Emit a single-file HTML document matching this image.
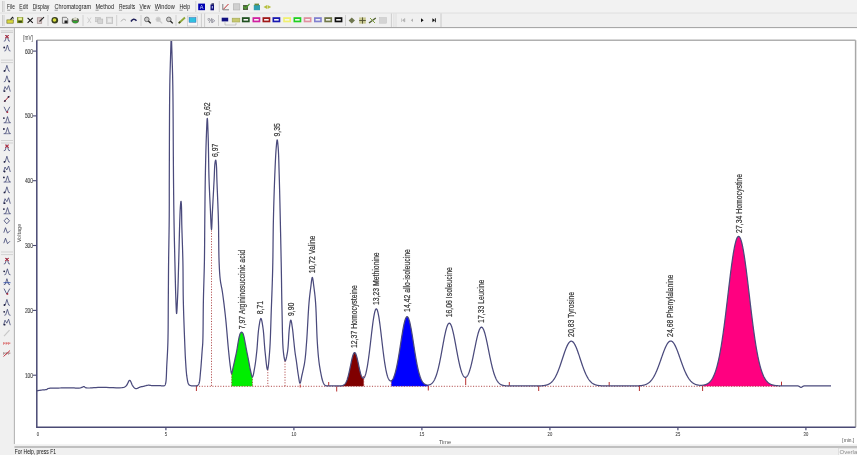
<!DOCTYPE html>
<html><head><meta charset="utf-8"><style>html,body{margin:0;padding:0;width:857px;height:455px;overflow:hidden;background:#f0f0f0;position:relative}svg{will-change:transform}</style></head><body>
<svg width="857" height="455" viewBox="0 0 857 455" style="position:absolute;left:0;top:0">
<rect x="0" y="0" width="857" height="455" fill="#f0f0f0"/>
<rect x="0" y="0" width="857" height="13" fill="#f2f2f2"/>
<line x1="0" y1="13.2" x2="857" y2="13.2" stroke="#d0d0d0" stroke-width="0.8"/>
<line x1="2.5" y1="1" x2="2.5" y2="12" stroke="#c4c4c4" stroke-width="0.8"/>
<line x1="4" y1="1" x2="4" y2="12" stroke="#c4c4c4" stroke-width="0.8"/>
<text x="7.1" y="9.1" font-family="Liberation Sans, sans-serif" font-size="7.0" fill="#202020" textLength="7.7" lengthAdjust="spacingAndGlyphs">File</text>
<line x1="7.1" y1="10.2" x2="10.3" y2="10.2" stroke="#444" stroke-width="0.5"/>
<text x="19.3" y="9.1" font-family="Liberation Sans, sans-serif" font-size="7.0" fill="#202020" textLength="8.7" lengthAdjust="spacingAndGlyphs">Edit</text>
<line x1="19.3" y1="10.2" x2="22.5" y2="10.2" stroke="#444" stroke-width="0.5"/>
<text x="32.7" y="9.1" font-family="Liberation Sans, sans-serif" font-size="7.0" fill="#202020" textLength="16.7" lengthAdjust="spacingAndGlyphs">Display</text>
<line x1="32.7" y1="10.2" x2="35.900000000000006" y2="10.2" stroke="#444" stroke-width="0.5"/>
<text x="54.6" y="9.1" font-family="Liberation Sans, sans-serif" font-size="7.0" fill="#202020" textLength="36.5" lengthAdjust="spacingAndGlyphs">Chromatogram</text>
<line x1="54.6" y1="10.2" x2="57.800000000000004" y2="10.2" stroke="#444" stroke-width="0.5"/>
<text x="95.5" y="9.1" font-family="Liberation Sans, sans-serif" font-size="7.0" fill="#202020" textLength="18.5" lengthAdjust="spacingAndGlyphs">Method</text>
<line x1="95.5" y1="10.2" x2="98.7" y2="10.2" stroke="#444" stroke-width="0.5"/>
<text x="118.9" y="9.1" font-family="Liberation Sans, sans-serif" font-size="7.0" fill="#202020" textLength="16.3" lengthAdjust="spacingAndGlyphs">Results</text>
<line x1="118.9" y1="10.2" x2="122.10000000000001" y2="10.2" stroke="#444" stroke-width="0.5"/>
<text x="139.4" y="9.1" font-family="Liberation Sans, sans-serif" font-size="7.0" fill="#202020" textLength="10.9" lengthAdjust="spacingAndGlyphs">View</text>
<line x1="139.4" y1="10.2" x2="142.6" y2="10.2" stroke="#444" stroke-width="0.5"/>
<text x="154.8" y="9.1" font-family="Liberation Sans, sans-serif" font-size="7.0" fill="#202020" textLength="19.9" lengthAdjust="spacingAndGlyphs">Window</text>
<line x1="154.8" y1="10.2" x2="158.0" y2="10.2" stroke="#444" stroke-width="0.5"/>
<text x="179.5" y="9.1" font-family="Liberation Sans, sans-serif" font-size="7.0" fill="#202020" textLength="10.6" lengthAdjust="spacingAndGlyphs">Help</text>
<line x1="179.5" y1="10.2" x2="182.7" y2="10.2" stroke="#444" stroke-width="0.5"/>
<rect x="0" y="13.5" width="857" height="13.7" fill="#f0f0f0"/>
<line x1="0" y1="27.6" x2="857" y2="27.6" stroke="#a8a8a8" stroke-width="1.3"/>
<line x1="2.5" y1="15" x2="2.5" y2="26" stroke="#c4c4c4" stroke-width="0.8"/>
<line x1="4" y1="15" x2="4" y2="26" stroke="#c4c4c4" stroke-width="0.8"/>
<line x1="48" y1="15" x2="48" y2="26" stroke="#c8c8c8" stroke-width="0.8"/>
<line x1="83" y1="15" x2="83" y2="26" stroke="#c8c8c8" stroke-width="0.8"/>
<line x1="116.7" y1="15" x2="116.7" y2="26" stroke="#c8c8c8" stroke-width="0.8"/>
<line x1="141" y1="15" x2="141" y2="26" stroke="#c8c8c8" stroke-width="0.8"/>
<line x1="176" y1="15" x2="176" y2="26" stroke="#c8c8c8" stroke-width="0.8"/>
<line x1="218.5" y1="15" x2="218.5" y2="26" stroke="#c8c8c8" stroke-width="0.8"/>
<line x1="345.5" y1="15" x2="345.5" y2="26" stroke="#c8c8c8" stroke-width="0.8"/>
<line x1="201.4" y1="13.5" x2="201.4" y2="27" stroke="#c4c4c4" stroke-width="0.8"/>
<line x1="204.6" y1="13.5" x2="204.6" y2="27" stroke="#c4c4c4" stroke-width="0.8"/>
<line x1="391.4" y1="13.5" x2="391.4" y2="27" stroke="#c4c4c4" stroke-width="0.8"/>
<line x1="393.9" y1="13.5" x2="393.9" y2="27" stroke="#d4d4d4" stroke-width="0.6"/>
<line x1="396" y1="13.5" x2="396" y2="27" stroke="#d4d4d4" stroke-width="0.6"/>
<line x1="441" y1="13.5" x2="441" y2="27" stroke="#c4c4c4" stroke-width="0.9"/>
<line x1="195.8" y1="1" x2="195.8" y2="12" stroke="#c8c8c8" stroke-width="0.8"/>
<line x1="219.3" y1="1" x2="219.3" y2="12" stroke="#c8c8c8" stroke-width="0.8"/>
<rect x="198.2" y="3.6" width="6.8" height="6.6" fill="#0000b0"/>
<text x="201.6" y="9.2" font-family="Liberation Sans, sans-serif" font-size="5.5" fill="#cfd8ff" text-anchor="middle">A</text>
<rect x="210.5" y="4.5" width="3.5" height="5.8" fill="#10107a"/><rect x="211.5" y="3.3" width="2.5" height="1.6" fill="#303060"/><rect x="211.8" y="6" width="1" height="2.5" fill="#c0c8ff"/>
<path d="M222.8,4 L222.8,9.8 L229,9.8" fill="none" stroke="#707070" stroke-width="0.9"/><path d="M223.5,9.2 L228.5,4" stroke="#c03030" stroke-width="1"/>
<rect x="233.3" y="3.8" width="6.5" height="6.2" fill="#d0d0d0" stroke="#b0b0b0" stroke-width="0.6"/>
<rect x="243" y="5" width="5" height="5" fill="#506040"/><path d="M243.5,6.5 L245.5,8.5 L249.5,3.8" fill="none" stroke="#50a030" stroke-width="1.2"/>
<rect x="253.8" y="5" width="6.2" height="5.2" fill="#30a0b0"/><rect x="254.5" y="3.6" width="4.5" height="1.8" fill="#6a8a3a"/>
<path d="M263.5,7 L267,5 L267,9 Z M267.5,5 L271.2,7 L267.5,9 Z" fill="#b8c040"/>
<path d="M6.8,19.8 L13.5,19.8 L13.3,23.3 L6.8,23.3 Z" fill="#d8d840" stroke="#505020" stroke-width="0.5"/><path d="M10.5,19.6 L12.5,17.3 L13.6,18.5" fill="none" stroke="#202020" stroke-width="1.1"/>
<rect x="17" y="17.1" width="6.2" height="6" fill="#8a9a30"/><rect x="18.3" y="17.6" width="3.6" height="2.4" fill="#e8f0a0"/><rect x="18.3" y="21" width="3.6" height="1.6" fill="#3a4a10"/>
<path d="M27.6,17.8 L32.8,22.8 M32.8,17.8 L27.6,22.8" stroke="#151515" stroke-width="1.1"/>
<rect x="37.2" y="17.8" width="4.6" height="5.6" fill="#d8c8c8" stroke="#8a7070" stroke-width="0.5"/><path d="M39.5,21.5 L44,17.2" stroke="#252525" stroke-width="1.1"/>
<circle cx="54.8" cy="20.3" r="3.3" fill="#3a4020"/><circle cx="54.5" cy="20" r="1.8" fill="#d8e040"/>
<path d="M62.4,17.3 L66.3,17.3 L67.8,18.8 L67.8,23.3 L62.4,23.3 Z" fill="#e8e8e8" stroke="#404040" stroke-width="0.6"/><rect x="64.5" y="20.5" width="3" height="2.6" fill="#202020"/>
<ellipse cx="75.3" cy="20.6" rx="3.7" ry="2.8" fill="#606850"/><path d="M72.5,21 L78,21 L77,23 L73.5,23 Z" fill="#30a030"/><rect x="73.3" y="18" width="3.8" height="2" fill="#d8d8c8"/>
<path d="M87.5,17.5 L91,23 M91,17.5 L87.5,23" stroke="#c8c8c8" stroke-width="0.8"/>
<rect x="95.5" y="17.3" width="5" height="4.5" fill="#d4d4d4" stroke="#b8b8b8" stroke-width="0.5"/><rect x="97.8" y="19" width="5" height="4.5" fill="#d4d4d4" stroke="#b0b0b0" stroke-width="0.5"/>
<rect x="106.5" y="17.2" width="6.2" height="6.2" fill="#d8d8d8" stroke="#b8b8b8" stroke-width="0.6"/><rect x="108" y="18.5" width="3.4" height="3.6" fill="#ececec"/>
<path d="M121,21.5 Q123.5,17.5 126,20.5" fill="none" stroke="#b0b0b0" stroke-width="1"/>
<path d="M131,21.5 Q133.5,17.3 136.5,20.8" fill="none" stroke="#20205a" stroke-width="1.6"/>
<circle cx="146.79999999999998" cy="19.4" r="2.3" fill="#c8c8c8" stroke="#6a6a6a" stroke-width="0.9"/><path d="M148.39999999999998,21 L150.79999999999998,23.4" stroke="#252525" stroke-width="1.3"/>
<circle cx="158.2" cy="19.4" r="2.3" fill="#c8c8c8" stroke="#d4d4d4" stroke-width="0.9"/><path d="M159.79999999999998,21 L162.2,23.4" stroke="#cccccc" stroke-width="1.3"/>
<circle cx="168.79999999999998" cy="19.4" r="2.3" fill="#c8c8c8" stroke="#6a6a6a" stroke-width="0.9"/><path d="M170.39999999999998,21 L172.79999999999998,23.4" stroke="#252525" stroke-width="1.3"/>
<path d="M179,23 L185,17.5" stroke="#90a838" stroke-width="1.8"/><path d="M178.6,23.3 L180.3,21.8" stroke="#404a20" stroke-width="1.4"/>
<rect x="187.4" y="16" width="10.2" height="10" fill="#f8f8f8" stroke="#c0c0c0" stroke-width="0.6"/><rect x="189" y="17.5" width="7" height="4.8" fill="#30c0e0" stroke="#2050a0" stroke-width="0.4"/>
<text x="207.5" y="22.6" font-family="Liberation Sans, sans-serif" font-size="6.5" fill="#606070">%</text><path d="M212.5,19 L214.8,20.8 L212.5,22.5" fill="none" stroke="#808090" stroke-width="0.7"/>
<rect x="221.7" y="17.7" width="6.5" height="3.7" fill="#101080"/><path d="M225,22 L225,25 L236,25 L236,23" fill="none" stroke="#a0a0a0" stroke-width="0.5"/>
<rect x="232.2" y="18.2" width="7.6" height="3.8" fill="#c8c870" stroke="#a0a850" stroke-width="0.6"/>
<rect x="241.9" y="17.2" width="7.8" height="5.1" fill="#205020"/><rect x="243.5" y="19.0" width="4.6" height="1.6" fill="#f4f4f4"/>
<rect x="252.5" y="17.2" width="7.8" height="5.1" fill="#d020a0"/><rect x="254.1" y="19.0" width="4.6" height="1.6" fill="#f4f4f4"/>
<rect x="262.5" y="17.2" width="7.8" height="5.1" fill="#a01818"/><rect x="264.1" y="19.0" width="4.6" height="1.6" fill="#f4f4f4"/>
<rect x="272.5" y="17.2" width="7.8" height="5.1" fill="#1818b0"/><rect x="274.1" y="19.0" width="4.6" height="1.6" fill="#f4f4f4"/>
<rect x="283.2" y="17.2" width="7.8" height="5.1" fill="#f0f070"/><rect x="284.8" y="19.0" width="4.6" height="1.6" fill="#f4f4f4"/>
<rect x="293.5" y="17.2" width="7.8" height="5.1" fill="#20d020"/><rect x="295.1" y="19.0" width="4.6" height="1.6" fill="#f4f4f4"/>
<rect x="303.7" y="17.2" width="7.8" height="5.1" fill="#e090a0"/><rect x="305.3" y="19.0" width="4.6" height="1.6" fill="#f4f4f4"/>
<rect x="314" y="17.2" width="7.8" height="5.1" fill="#8080d0"/><rect x="315.6" y="19.0" width="4.6" height="1.6" fill="#f4f4f4"/>
<rect x="324.3" y="17.2" width="7.8" height="5.1" fill="#707848"/><rect x="325.90000000000003" y="19.0" width="4.6" height="1.6" fill="#f4f4f4"/>
<rect x="334.6" y="17.2" width="7.8" height="5.1" fill="#101010"/><rect x="336.20000000000005" y="19.0" width="4.6" height="1.6" fill="#f4f4f4"/>
<path d="M351.8,17.5 L355,20.5 L351.8,23.5 L348.6,20.5 Z" fill="#707850"/>
<rect x="359.2" y="17.4" width="6.6" height="6.2" fill="#c8c890"/><path d="M362.5,17.4 V23.6 M359.2,20.5 H365.8" stroke="#505030" stroke-width="0.9"/>
<path d="M369,23 L375.8,18" stroke="#506030" stroke-width="1.4"/><path d="M370,18 L375,23" stroke="#80a040" stroke-width="1"/>
<rect x="379.6" y="17.6" width="6.8" height="5.6" fill="#d4d4d4" stroke="#c0c0c0" stroke-width="0.5"/>
<path d="M401.5,18.5 V22 M404.8,18.5 L402.5,20.25 L404.8,22 Z" fill="#b0b0b0" stroke="#b0b0b0" stroke-width="0.6"/>
<path d="M413,18.5 L410.8,20.25 L413,22 Z" fill="#b0b0b0"/>
<path d="M421,18.3 L423.6,20.25 L421,22.2 Z" fill="#101010"/>
<path d="M432.4,18.3 L435,20.25 L432.4,22.2 Z" fill="#101010"/><path d="M435.4,18.3 V22.2" stroke="#101010" stroke-width="0.9"/>
<rect x="0" y="28.3" width="14.4" height="418" fill="#f0f0f0"/>
<line x1="14.4" y1="28.3" x2="14.4" y2="444" stroke="#a0a0a0" stroke-width="0.9"/>
<line x1="1" y1="30.9" x2="13" y2="30.9" stroke="#c4c4c4" stroke-width="0.7"/>
<line x1="1" y1="32.5" x2="13" y2="32.5" stroke="#c4c4c4" stroke-width="0.7"/>
<line x1="1" y1="60.1" x2="13" y2="60.1" stroke="#c4c4c4" stroke-width="0.7"/>
<line x1="1" y1="62.6" x2="13" y2="62.6" stroke="#c4c4c4" stroke-width="0.7"/>
<line x1="1" y1="140.5" x2="13" y2="140.5" stroke="#c4c4c4" stroke-width="0.7"/>
<line x1="1" y1="143" x2="13" y2="143" stroke="#c4c4c4" stroke-width="0.7"/>
<line x1="1" y1="252" x2="13" y2="252" stroke="#c4c4c4" stroke-width="0.7"/>
<line x1="1" y1="254.6" x2="13" y2="254.6" stroke="#c4c4c4" stroke-width="0.7"/>
<path d="M3.8,41.2 L5.2,40.800000000000004 L6.9,35.2 L8.6,40.800000000000004 L10,41.2" fill="none" stroke="#3a4070" stroke-width="0.75"/><path d="M5,35.2 L9,38.2 M9,35.2 L5,38.2" stroke="#c02030" stroke-width="0.9"/>
<path d="M4.3,51.0 L5.7,50.6 L7.4,45.0 L9.1,50.6 L10.5,51.0" fill="none" stroke="#3a4070" stroke-width="0.75"/><circle cx="4.2" cy="47.5" r="0.9" fill="#202040"/>
<path d="M3.8,71.3 L5.2,70.89999999999999 L6.9,65.3 L8.6,70.89999999999999 L10,71.3" fill="none" stroke="#3a4070" stroke-width="0.75"/><circle cx="4.5" cy="70.89999999999999" r="0.9" fill="#202040"/>
<path d="M3.8,81.8 L5.2,81.39999999999999 L6.9,75.8 L8.6,81.39999999999999 L10,81.8" fill="none" stroke="#3a4070" stroke-width="0.75"/><circle cx="9.3" cy="81.39999999999999" r="0.9" fill="#202040"/>
<path d="M3.5,91.6 L5,86.6 L6.8,89.6 L8.6,85.6 L10.3,91.6" fill="none" stroke="#3a4070" stroke-width="0.75"/><circle cx="4.6" cy="91.1" r="0.9" fill="#202040"/>
<path d="M4,101.9 L9.5,95.9" stroke="#b02030" stroke-width="1"/><circle cx="5" cy="100.9" r="0.9" fill="#202040"/><circle cx="8.5" cy="96.9" r="0.9" fill="#202040"/>
<path d="M4,106.8 L6.8,112.3 L9.8,106.8" fill="none" stroke="#3a4070" stroke-width="0.8"/><circle cx="7.4" cy="112.1" r="0.9" fill="#b02030"/>
<path d="M4.3999999999999995,122.6 L5.8,122.19999999999999 L7.5,116.6 L9.2,122.19999999999999 L10.6,122.6" fill="none" stroke="#3a4070" stroke-width="0.75"/><path d="M3.5,122.8 L10.5,122.8" stroke="#3a4070" stroke-width="0.6"/><circle cx="3.9" cy="118.1" r="0.9" fill="#202040"/>
<path d="M4.3999999999999995,133.5 L5.8,133.1 L7.5,127.5 L9.2,133.1 L10.6,133.5" fill="none" stroke="#3a4070" stroke-width="0.75"/><path d="M3.5,133.7 L10.5,133.7" stroke="#3a4070" stroke-width="0.6"/><circle cx="3.9" cy="129.0" r="0.9" fill="#202040"/>
<path d="M3.8,150.7 L5.2,150.29999999999998 L6.9,144.7 L8.6,150.29999999999998 L10,150.7" fill="none" stroke="#3a4070" stroke-width="0.75"/><path d="M5,144.7 L9,147.7 M9,144.7 L5,147.7" stroke="#c02030" stroke-width="0.9"/>
<path d="M3.8,162.2 L5.2,161.79999999999998 L6.9,156.2 L8.6,161.79999999999998 L10,162.2" fill="none" stroke="#3a4070" stroke-width="0.75"/><circle cx="4.5" cy="161.79999999999998" r="0.9" fill="#202040"/>
<path d="M3.5,172.0 L5,167.0 L6.8,170.0 L8.6,166.0 L10.3,172.0" fill="none" stroke="#3a4070" stroke-width="0.75"/><circle cx="4.6" cy="171.5" r="0.9" fill="#202040"/>
<path d="M4.3999999999999995,181.9 L5.8,181.5 L7.5,175.9 L9.2,181.5 L10.6,181.9" fill="none" stroke="#3a4070" stroke-width="0.75"/><path d="M3.5,182.1 L10.5,182.1" stroke="#3a4070" stroke-width="0.6"/><circle cx="3.9" cy="177.4" r="0.9" fill="#202040"/>
<path d="M3.8,192.8 L5.2,192.4 L6.9,186.8 L8.6,192.4 L10,192.8" fill="none" stroke="#3a4070" stroke-width="0.75"/><circle cx="4.5" cy="192.4" r="0.9" fill="#202040"/>
<path d="M3.5,203.7 L5,198.7 L6.8,201.7 L8.6,197.7 L10.3,203.7" fill="none" stroke="#3a4070" stroke-width="0.75"/><circle cx="4.6" cy="203.2" r="0.9" fill="#202040"/>
<path d="M4.3999999999999995,213.6 L5.8,213.2 L7.5,207.6 L9.2,213.2 L10.6,213.6" fill="none" stroke="#3a4070" stroke-width="0.75"/><path d="M3.5,213.79999999999998 L10.5,213.79999999999998" stroke="#3a4070" stroke-width="0.6"/><circle cx="3.9" cy="209.1" r="0.9" fill="#202040"/>
<path d="M6.8,217.8 L9.5,220.8 L6.8,223.8 L4.1,220.8 Z" fill="none" stroke="#3a4070" stroke-width="0.8"/>
<path d="M3.8,232.7 L5.5,227.7 L7.5,233.2 L10,230.7" fill="none" stroke="#3a4070" stroke-width="0.8"/>
<path d="M3.8,243.2 L5.5,238.2 L7.5,243.7 L10,241.2" fill="none" stroke="#3a4070" stroke-width="0.8"/>
<path d="M3.8,264 L5.2,263.6 L6.9,258 L8.6,263.6 L10,264" fill="none" stroke="#3a4070" stroke-width="0.75"/><path d="M5,258 L9,261 M9,258 L5,261" stroke="#c02030" stroke-width="0.9"/>
<path d="M4.3,274.8 L5.7,274.40000000000003 L7.4,268.8 L9.1,274.40000000000003 L10.5,274.8" fill="none" stroke="#3a4070" stroke-width="0.75"/><circle cx="4.2" cy="271.3" r="0.9" fill="#202040"/>
<path d="M3.8,284.7 L5.2,284.3 L6.9,278.7 L8.6,284.3 L10,284.7" fill="none" stroke="#3a4070" stroke-width="0.75"/><path d="M3.5,282.7 L10.5,282.7" stroke="#2040a0" stroke-width="0.8"/>
<path d="M4,288.6 L6.8,294.1 L9.8,288.6" fill="none" stroke="#3a4070" stroke-width="0.8"/><circle cx="7.4" cy="293.90000000000003" r="0.9" fill="#b02030"/>
<path d="M3.8,305.4 L5.2,305.0 L6.9,299.4 L8.6,305.0 L10,305.4" fill="none" stroke="#3a4070" stroke-width="0.75"/><circle cx="4.5" cy="305.0" r="0.9" fill="#202040"/>
<path d="M4.3,315.3 L5.7,314.90000000000003 L7.4,309.3 L9.1,314.90000000000003 L10.5,315.3" fill="none" stroke="#3a4070" stroke-width="0.75"/><circle cx="4.2" cy="311.8" r="0.9" fill="#202040"/>
<path d="M3.5,325.2 L5,320.2 L6.8,323.2 L8.6,319.2 L10.3,325.2" fill="none" stroke="#3a4070" stroke-width="0.75"/><circle cx="4.6" cy="324.7" r="0.9" fill="#202040"/>
<path d="M4,336.1 L9.5,330.1" stroke="#c8c8c8" stroke-width="1.2"/>
<text x="6.8" y="344.5" font-family="Liberation Sans, sans-serif" font-size="4.2" fill="#d03030" text-anchor="middle">FFF</text>
<text x="6.8" y="355.3" font-family="Liberation Sans, sans-serif" font-size="4.2" fill="#806060" text-anchor="middle">FFF</text><path d="M3.5,356.5 L10,350.5" stroke="#c02030" stroke-width="0.9"/>
<rect x="14.9" y="28.3" width="842.1" height="416" fill="#ffffff"/>
<rect x="0" y="446" width="857" height="9" fill="#f0f0f0"/>
<line x1="14.4" y1="447" x2="857" y2="447" stroke="#b0b0b0" stroke-width="1.5"/>
<text x="14.7" y="454.3" font-family="Liberation Sans, sans-serif" font-size="6.6" fill="#111" textLength="41.3" lengthAdjust="spacingAndGlyphs">For Help, press F1</text>
<rect x="838.6" y="448.2" width="20" height="8" fill="#f5f5f5" stroke="#d4d4d4" stroke-width="0.6"/>
<text x="839.6" y="453.8" font-family="Liberation Sans, sans-serif" font-size="6" fill="#8a8a8a">Overlay</text>
<line x1="36.8" y1="40.2" x2="855.6" y2="40.2" stroke="#b0b0b0" stroke-width="1.5"/>
<line x1="855.6" y1="40.2" x2="855.6" y2="427.2" stroke="#a8a8a8" stroke-width="1.5"/>
<defs><clipPath id="pc"><rect x="36.8" y="40.9" width="818" height="386"/></clipPath></defs>
<g clip-path="url(#pc)">
<path d="M231.60,386.30 L231.60,373.50 L231.60,373.50 L231.78,373.32 L231.97,372.81 L232.17,372.05 L232.37,371.11 L232.58,370.06 L232.79,368.98 L233.00,367.94 L233.20,367.00 L233.42,366.04 L233.65,365.06 L233.88,364.06 L234.10,363.05 L234.33,362.04 L234.56,361.02 L234.78,360.01 L235.00,359.00 L235.22,358.00 L235.44,357.01 L235.66,356.02 L235.87,355.03 L236.09,354.04 L236.30,353.04 L236.50,352.02 L236.70,351.00 L236.90,349.89 L237.10,348.74 L237.29,347.57 L237.48,346.40 L237.66,345.24 L237.84,344.11 L238.02,343.02 L238.20,342.00 L238.34,341.24 L238.47,340.49 L238.60,339.77 L238.73,339.07 L238.87,338.40 L239.00,337.74 L239.15,337.11 L239.30,336.50 L239.42,336.03 L239.54,335.56 L239.66,335.10 L239.79,334.66 L239.92,334.24 L240.06,333.85 L240.22,333.50 L240.40,333.20 L240.53,333.01 L240.67,332.83 L240.82,332.67 L240.98,332.51 L241.13,332.39 L241.29,332.29 L241.45,332.22 L241.60,332.20 L241.75,332.22 L241.91,332.29 L242.07,332.39 L242.22,332.51 L242.38,332.67 L242.53,332.83 L242.67,333.01 L242.80,333.20 L242.98,333.50 L243.14,333.85 L243.28,334.24 L243.41,334.66 L243.54,335.10 L243.66,335.56 L243.78,336.03 L243.90,336.50 L244.05,337.11 L244.19,337.74 L244.33,338.40 L244.46,339.07 L244.59,339.77 L244.72,340.50 L244.86,341.24 L245.00,342.00 L245.20,343.02 L245.40,344.10 L245.61,345.22 L245.83,346.38 L246.04,347.55 L246.26,348.72 L246.48,349.87 L246.70,351.00 L246.91,352.07 L247.12,353.12 L247.33,354.17 L247.54,355.21 L247.75,356.26 L247.97,357.32 L248.18,358.40 L248.40,359.50 L248.64,360.77 L248.88,362.10 L249.12,363.45 L249.36,364.82 L249.61,366.18 L249.86,367.50 L250.13,368.79 L250.40,370.00 L250.64,371.04 L250.88,372.19 L251.13,373.35 L251.38,374.47 L251.64,375.47 L251.90,376.28 L252.15,376.81 L252.40,377.00 L252.40,377.00 L252.40,386.30 Z" fill="#00ee00"/>
<path d="M336.00,386.30 L336.00,385.99 L336.00,385.99 L336.25,385.99 L336.50,385.99 L336.75,385.99 L337.00,385.99 L337.25,385.99 L337.50,385.99 L337.75,385.99 L338.00,385.98 L338.25,385.98 L338.50,385.98 L338.75,385.97 L339.00,385.97 L339.25,385.96 L339.50,385.95 L339.75,385.94 L340.00,385.93 L340.25,385.92 L340.50,385.90 L340.75,385.88 L341.00,385.86 L341.25,385.83 L341.50,385.79 L341.75,385.75 L342.00,385.69 L342.25,385.63 L342.50,385.56 L342.75,385.48 L343.00,385.38 L343.25,385.27 L343.50,385.14 L343.75,384.99 L344.00,384.81 L344.25,384.61 L344.50,384.39 L344.75,384.13 L345.00,383.84 L345.25,383.51 L345.50,383.15 L345.75,382.74 L346.00,382.29 L346.25,381.80 L346.50,381.25 L346.75,380.65 L347.00,380.00 L347.25,379.30 L347.50,378.54 L347.75,377.73 L348.00,376.86 L348.25,375.93 L348.50,374.96 L348.75,373.93 L349.00,372.86 L349.25,371.75 L349.50,370.60 L349.75,369.42 L350.00,368.21 L350.25,366.98 L350.50,365.75 L350.75,364.52 L351.00,363.30 L351.25,362.09 L351.50,360.92 L351.75,359.78 L352.00,358.70 L352.25,357.67 L352.50,356.72 L352.75,355.85 L353.00,355.06 L353.25,354.38 L353.50,353.79 L353.75,353.32 L354.00,352.96 L354.25,352.73 L354.50,352.61 L354.75,352.62 L355.00,352.75 L355.25,353.00 L355.50,353.37 L355.75,353.86 L356.00,354.45 L356.25,355.14 L356.50,355.93 L356.75,356.80 L357.00,357.75 L357.25,358.76 L357.50,359.83 L357.75,360.94 L358.00,362.08 L358.25,363.25 L358.50,364.43 L358.75,365.61 L359.00,366.77 L359.25,367.92 L359.50,369.04 L359.75,370.12 L360.00,371.16 L360.25,372.15 L360.50,373.07 L360.75,373.94 L361.00,374.73 L361.25,375.45 L361.50,376.09 L361.75,376.65 L362.00,377.13 L362.25,377.52 L362.50,377.83 L362.75,378.05 L363.00,378.18 L363.25,378.23 L363.50,378.18 L363.70,378.07 L363.70,386.30 Z" fill="#800000"/>
<path d="M391.30,386.30 L391.30,380.74 L391.50,380.63 L391.75,380.43 L392.00,380.19 L392.25,379.90 L392.50,379.57 L392.75,379.18 L393.00,378.75 L393.25,378.27 L393.50,377.74 L393.75,377.16 L394.00,376.53 L394.25,375.86 L394.50,375.13 L394.75,374.36 L395.00,373.54 L395.25,372.67 L395.50,371.75 L395.75,370.78 L396.00,369.76 L396.25,368.70 L396.50,367.58 L396.75,366.42 L397.00,365.21 L397.25,363.96 L397.50,362.67 L397.75,361.33 L398.00,359.96 L398.25,358.54 L398.50,357.09 L398.75,355.61 L399.00,354.10 L399.25,352.56 L399.50,351.00 L399.75,349.42 L400.00,347.82 L400.25,346.22 L400.50,344.60 L400.75,342.99 L401.00,341.38 L401.25,339.77 L401.50,338.18 L401.75,336.61 L402.00,335.06 L402.25,333.53 L402.50,332.05 L402.75,330.60 L403.00,329.20 L403.25,327.85 L403.50,326.55 L403.75,325.32 L404.00,324.15 L404.25,323.05 L404.50,322.03 L404.75,321.08 L405.00,320.22 L405.25,319.45 L405.50,318.77 L405.75,318.18 L406.00,317.69 L406.25,317.29 L406.50,316.99 L406.75,316.80 L407.00,316.71 L407.25,316.72 L407.50,316.83 L407.75,317.05 L408.00,317.36 L408.25,317.78 L408.50,318.29 L408.75,318.90 L409.00,319.60 L409.25,320.39 L409.50,321.26 L409.75,322.22 L410.00,323.26 L410.25,324.37 L410.50,325.56 L410.75,326.80 L411.00,328.11 L411.25,329.47 L411.50,330.88 L411.75,332.34 L412.00,333.83 L412.25,335.36 L412.50,336.92 L412.75,338.49 L413.00,340.09 L413.25,341.70 L413.50,343.31 L413.75,344.93 L414.00,346.54 L414.25,348.15 L414.50,349.74 L414.75,351.32 L415.00,352.88 L415.25,354.41 L415.50,355.92 L415.75,357.40 L416.00,358.84 L416.25,360.25 L416.50,361.63 L416.75,362.96 L417.00,364.25 L417.25,365.51 L417.50,366.71 L417.75,367.88 L418.00,368.99 L418.25,370.06 L418.50,371.09 L418.75,372.07 L419.00,373.01 L419.25,373.90 L419.50,374.74 L419.75,375.54 L420.00,376.30 L420.25,377.02 L420.50,377.69 L420.75,378.33 L421.00,378.92 L421.25,379.48 L421.50,380.00 L421.75,380.49 L422.00,380.94 L422.25,381.37 L422.50,381.76 L422.75,382.12 L423.00,382.45 L423.25,382.76 L423.50,383.04 L423.75,383.30 L424.00,383.54 L424.25,383.76 L424.50,383.95 L424.75,384.13 L425.00,384.28 L425.25,384.43 L425.50,384.55 L425.75,384.66 L426.00,384.75 L426.25,384.83 L426.50,384.90 L426.75,384.95 L427.00,385.00 L427.25,385.03 L427.50,385.04 L427.75,385.05 L428.00,385.04 L428.25,385.03 L428.50,385.00 L428.50,385.00 L428.50,386.30 Z" fill="#0000ff"/>
<path d="M702.80,386.30 L702.80,385.21 L703.00,385.19 L703.25,385.15 L703.50,385.11 L703.75,385.07 L704.00,385.02 L704.25,384.96 L704.50,384.90 L704.75,384.84 L705.00,384.77 L705.25,384.69 L705.50,384.61 L705.75,384.52 L706.00,384.43 L706.25,384.33 L706.50,384.22 L706.75,384.10 L707.00,383.98 L707.25,383.84 L707.50,383.70 L707.75,383.55 L708.00,383.39 L708.25,383.22 L708.50,383.04 L708.75,382.85 L709.00,382.64 L709.25,382.43 L709.50,382.20 L709.75,381.96 L710.00,381.71 L710.25,381.44 L710.50,381.15 L710.75,380.86 L711.00,380.54 L711.25,380.21 L711.50,379.86 L711.75,379.49 L712.00,379.11 L712.25,378.70 L712.50,378.28 L712.75,377.83 L713.00,377.37 L713.25,376.88 L713.50,376.37 L713.75,375.83 L714.00,375.27 L714.25,374.69 L714.50,374.08 L714.75,373.45 L715.00,372.78 L715.25,372.09 L715.50,371.37 L715.75,370.62 L716.00,369.85 L716.25,369.04 L716.50,368.20 L716.75,367.33 L717.00,366.43 L717.25,365.49 L717.50,364.52 L717.75,363.52 L718.00,362.48 L718.25,361.41 L718.50,360.30 L718.75,359.16 L719.00,357.98 L719.25,356.77 L719.50,355.52 L719.75,354.24 L720.00,352.91 L720.25,351.56 L720.50,350.16 L720.75,348.73 L721.00,347.26 L721.25,345.76 L721.50,344.22 L721.75,342.64 L722.00,341.04 L722.25,339.39 L722.50,337.71 L722.75,336.00 L723.00,334.26 L723.25,332.48 L723.50,330.68 L723.75,328.84 L724.00,326.98 L724.25,325.08 L724.50,323.16 L724.75,321.22 L725.00,319.25 L725.25,317.26 L725.50,315.25 L725.75,313.22 L726.00,311.17 L726.25,309.11 L726.50,307.03 L726.75,304.94 L727.00,302.84 L727.25,300.73 L727.50,298.62 L727.75,296.50 L728.00,294.38 L728.25,292.26 L728.50,290.15 L728.75,288.04 L729.00,285.94 L729.25,283.85 L729.50,281.77 L729.75,279.71 L730.00,277.67 L730.25,275.65 L730.50,273.65 L730.75,271.68 L731.00,269.73 L731.25,267.82 L731.50,265.94 L731.75,264.10 L732.00,262.30 L732.25,260.54 L732.50,258.83 L732.75,257.16 L733.00,255.54 L733.25,253.97 L733.50,252.45 L733.75,251.00 L734.00,249.60 L734.25,248.26 L734.50,246.98 L734.75,245.77 L735.00,244.63 L735.25,243.55 L735.50,242.55 L735.75,241.61 L736.00,240.75 L736.25,239.96 L736.50,239.25 L736.75,238.62 L737.00,238.06 L737.25,237.59 L737.50,237.19 L737.75,236.87 L738.00,236.63 L738.25,236.48 L738.50,236.41 L738.75,236.41 L739.00,236.50 L739.25,236.68 L739.50,236.93 L739.75,237.26 L740.00,237.67 L740.25,238.17 L740.50,238.74 L740.75,239.39 L741.00,240.11 L741.25,240.92 L741.50,241.79 L741.75,242.74 L742.00,243.76 L742.25,244.85 L742.50,246.01 L742.75,247.23 L743.00,248.52 L743.25,249.87 L743.50,251.28 L743.75,252.75 L744.00,254.28 L744.25,255.85 L744.50,257.48 L744.75,259.16 L745.00,260.89 L745.25,262.66 L745.50,264.47 L745.75,266.31 L746.00,268.20 L746.25,270.12 L746.50,272.07 L746.75,274.04 L747.00,276.05 L747.25,278.07 L747.50,280.12 L747.75,282.18 L748.00,284.26 L748.25,286.36 L748.50,288.46 L748.75,290.57 L749.00,292.68 L749.25,294.80 L749.50,296.92 L749.75,299.04 L750.00,301.15 L750.25,303.26 L750.50,305.35 L750.75,307.44 L751.00,309.52 L751.25,311.58 L751.50,313.62 L751.75,315.65 L752.00,317.66 L752.25,319.64 L752.50,321.61 L752.75,323.55 L753.00,325.46 L753.25,327.35 L753.50,329.21 L753.75,331.04 L754.00,332.84 L754.25,334.60 L754.50,336.34 L754.75,338.05 L755.00,339.72 L755.25,341.35 L755.50,342.96 L755.75,344.52 L756.00,346.05 L756.25,347.55 L756.50,349.01 L756.75,350.44 L757.00,351.82 L757.25,353.17 L757.50,354.49 L757.75,355.77 L758.00,357.01 L758.25,358.22 L758.50,359.39 L758.75,360.52 L759.00,361.62 L759.25,362.68 L759.50,363.71 L759.75,364.71 L760.00,365.67 L760.25,366.60 L760.50,367.50 L760.75,368.36 L761.00,369.19 L761.25,370.00 L761.50,370.77 L761.75,371.51 L762.00,372.22 L762.25,372.91 L762.50,373.57 L762.75,374.20 L763.00,374.80 L763.25,375.38 L763.50,375.93 L763.75,376.46 L764.00,376.97 L764.25,377.45 L764.50,377.92 L764.75,378.36 L765.00,378.78 L765.25,379.18 L765.50,379.56 L765.75,379.93 L766.00,380.27 L766.25,380.60 L766.50,380.91 L766.75,381.21 L767.00,381.49 L767.25,381.76 L767.50,382.01 L767.75,382.25 L768.00,382.47 L768.25,382.69 L768.50,382.89 L768.75,383.08 L769.00,383.26 L769.25,383.43 L769.50,383.59 L769.75,383.74 L770.00,383.89 L770.25,384.02 L770.50,384.15 L770.75,384.27 L771.00,384.38 L771.25,384.48 L771.50,384.58 L771.75,384.67 L772.00,384.76 L772.25,384.84 L772.50,384.91 L772.75,384.98 L773.00,385.05 L773.25,385.11 L773.50,385.17 L773.75,385.22 L774.00,385.27 L774.25,385.32 L774.50,385.36 L774.75,385.41 L775.00,385.44 L775.25,385.48 L775.50,385.51 L775.75,385.54 L776.00,385.57 L776.25,385.60 L776.50,385.62 L776.75,385.64 L777.00,385.66 L777.20,385.68 L777.20,386.30 Z" fill="#ff0080"/>
</g>
<line x1="196.4" y1="386.3" x2="781.5" y2="386.3" stroke="#a83838" stroke-width="0.9" stroke-dasharray="1.1,1.56"/>
<line x1="211.5" y1="230.5" x2="211.5" y2="386.3" stroke="#a83838" stroke-width="0.9" stroke-dasharray="1.1,1.56"/>
<line x1="231.8" y1="374" x2="231.8" y2="386.3" stroke="#a83838" stroke-width="0.9" stroke-dasharray="1.1,1.56"/>
<line x1="252.4" y1="376.5" x2="252.4" y2="386.3" stroke="#a83838" stroke-width="0.9" stroke-dasharray="1.1,1.56"/>
<line x1="267.8" y1="369.5" x2="267.8" y2="386.3" stroke="#a83838" stroke-width="0.9" stroke-dasharray="1.1,1.56"/>
<line x1="285.0" y1="361" x2="285.0" y2="386.3" stroke="#a83838" stroke-width="0.9" stroke-dasharray="1.1,1.56"/>
<line x1="363.7" y1="376" x2="363.7" y2="386.3" stroke="#a83838" stroke-width="0.9" stroke-dasharray="1.1,1.56"/>
<line x1="391.3" y1="381.5" x2="391.3" y2="386.3" stroke="#a83838" stroke-width="0.9" stroke-dasharray="1.1,1.56"/>
<line x1="196.4" y1="385.8" x2="196.4" y2="391" stroke="#b83030" stroke-width="1"/>
<line x1="328.7" y1="382" x2="328.7" y2="386" stroke="#b83030" stroke-width="1"/>
<line x1="336.7" y1="386.5" x2="336.7" y2="391.5" stroke="#b83030" stroke-width="1"/>
<line x1="428.3" y1="386" x2="428.3" y2="390.5" stroke="#b83030" stroke-width="1"/>
<line x1="465.7" y1="377" x2="465.7" y2="385" stroke="#b83030" stroke-width="1"/>
<line x1="509.3" y1="382" x2="509.3" y2="386" stroke="#b83030" stroke-width="1"/>
<line x1="538.7" y1="386" x2="538.7" y2="391" stroke="#b83030" stroke-width="1"/>
<line x1="609.2" y1="382" x2="609.2" y2="386" stroke="#b83030" stroke-width="1"/>
<line x1="639.4" y1="386" x2="639.4" y2="391" stroke="#b83030" stroke-width="1"/>
<line x1="702.6" y1="386" x2="702.6" y2="391" stroke="#b83030" stroke-width="1"/>
<line x1="781.5" y1="381.7" x2="781.5" y2="386" stroke="#b83030" stroke-width="1"/>
<line x1="300.2" y1="384.5" x2="300.2" y2="387.5" stroke="#b83030" stroke-width="1"/>
<g clip-path="url(#pc)">
<path d="M37.00,390.80 L37.63,390.70 L38.25,390.60 L38.88,390.49 L39.51,390.39 L40.13,390.29 L40.76,390.19 L41.38,390.09 L42.00,390.00 L42.62,389.92 L43.28,389.86 L43.94,389.81 L44.60,389.76 L45.23,389.70 L45.82,389.63 L46.35,389.53 L46.80,389.40 L47.01,389.30 L47.18,389.19 L47.33,389.08 L47.46,388.95 L47.60,388.83 L47.76,388.71 L47.95,388.60 L48.20,388.50 L49.12,388.30 L50.35,388.17 L51.81,388.10 L53.43,388.06 L55.13,388.04 L56.84,388.04 L58.49,388.03 L60.00,388.00 L61.29,387.96 L62.56,387.92 L63.81,387.89 L65.05,387.86 L66.29,387.83 L67.52,387.82 L68.76,387.80 L70.00,387.80 L71.30,387.82 L72.68,387.88 L74.09,387.95 L75.48,388.02 L76.82,388.08 L78.04,388.11 L79.12,388.09 L80.00,388.00 L80.33,387.94 L80.62,387.86 L80.87,387.77 L81.11,387.68 L81.33,387.59 L81.54,387.49 L81.76,387.39 L82.00,387.30 L82.24,387.20 L82.48,387.09 L82.72,386.96 L82.95,386.84 L83.19,386.74 L83.42,386.65 L83.66,386.61 L83.90,386.60 L84.15,386.66 L84.37,386.78 L84.59,386.94 L84.81,387.12 L85.05,387.32 L85.32,387.51 L85.63,387.68 L86.00,387.80 L87.12,387.96 L88.52,388.00 L90.16,387.94 L91.98,387.82 L93.92,387.67 L95.94,387.51 L97.99,387.37 L100.00,387.30 L102.84,387.31 L106.07,387.42 L109.52,387.56 L113.01,387.70 L116.36,387.79 L119.40,387.78 L121.93,387.64 L123.80,387.30 L124.30,387.13 L124.71,386.96 L125.07,386.77 L125.37,386.57 L125.65,386.34 L125.92,386.09 L126.20,385.81 L126.50,385.50 L126.93,384.93 L127.35,384.17 L127.75,383.32 L128.15,382.44 L128.54,381.61 L128.93,380.93 L129.31,380.47 L129.70,380.30 L130.09,380.49 L130.47,381.00 L130.85,381.73 L131.22,382.61 L131.59,383.56 L131.98,384.50 L132.38,385.34 L132.80,386.00 L133.13,386.43 L133.47,386.85 L133.81,387.26 L134.16,387.64 L134.52,387.98 L134.89,388.26 L135.29,388.47 L135.70,388.60 L136.18,388.62 L136.69,388.53 L137.23,388.34 L137.78,388.09 L138.34,387.82 L138.90,387.54 L139.46,387.29 L140.00,387.10 L140.50,386.96 L141.00,386.84 L141.50,386.73 L141.99,386.62 L142.49,386.52 L142.99,386.42 L143.49,386.31 L144.00,386.20 L144.54,386.07 L145.09,385.92 L145.65,385.76 L146.21,385.61 L146.77,385.47 L147.32,385.34 L147.87,385.25 L148.40,385.20 L148.86,385.19 L149.29,385.22 L149.71,385.27 L150.13,385.34 L150.56,385.42 L151.01,385.49 L151.48,385.55 L152.00,385.60 L152.86,385.64 L153.83,385.67 L154.87,385.69 L155.94,385.70 L157.03,385.71 L158.09,385.71 L159.09,385.70 L160.00,385.70 L160.65,385.72 L161.30,385.76 L161.93,385.82 L162.55,385.86 L163.12,385.88 L163.65,385.86 L164.11,385.77 L164.50,385.60 L164.73,385.44 L164.91,385.25 L165.06,385.04 L165.19,384.81 L165.29,384.54 L165.39,384.23 L165.49,383.89 L165.60,383.50 L165.88,382.09 L166.10,380.23 L166.26,378.01 L166.39,375.54 L166.49,372.90 L166.58,370.20 L166.68,367.54 L166.80,365.00 L166.95,362.29 L167.11,359.59 L167.26,356.86 L167.41,354.09 L167.55,351.24 L167.68,348.29 L167.80,345.22 L167.90,342.00 L168.01,337.34 L168.09,332.33 L168.15,327.08 L168.18,321.65 L168.21,316.15 L168.24,310.65 L168.26,305.24 L168.30,300.00 L168.34,295.17 L168.37,290.41 L168.41,285.69 L168.44,281.00 L168.47,276.31 L168.51,271.59 L168.55,266.83 L168.60,262.00 L168.66,256.85 L168.74,251.65 L168.83,246.40 L168.91,241.13 L169.00,235.84 L169.08,230.55 L169.15,225.26 L169.20,220.00 L169.24,214.86 L169.26,209.89 L169.27,204.97 L169.27,200.03 L169.27,194.96 L169.27,189.66 L169.28,184.04 L169.30,178.00 L169.33,167.77 L169.37,156.11 L169.41,143.54 L169.45,130.58 L169.51,117.72 L169.58,105.50 L169.68,94.42 L169.80,85.00 L169.88,80.39 L169.98,76.10 L170.08,72.09 L170.19,68.32 L170.30,64.77 L170.40,61.39 L170.51,58.14 L170.60,55.00 L170.66,52.89 L170.72,50.94 L170.79,49.09 L170.84,47.31 L170.90,45.56 L170.95,43.78 L171.00,41.94 L171.05,40.00 L171.10,37.36 L171.13,34.26 L171.16,30.95 L171.19,27.68 L171.22,24.70 L171.24,22.25 L171.27,20.61 L171.30,20.00 L171.33,20.61 L171.36,22.25 L171.38,24.70 L171.41,27.68 L171.44,30.95 L171.47,34.26 L171.50,37.36 L171.55,40.00 L171.60,41.94 L171.65,43.78 L171.70,45.56 L171.76,47.31 L171.81,49.09 L171.88,50.94 L171.94,52.89 L172.00,55.00 L172.09,58.14 L172.19,61.39 L172.30,64.77 L172.41,68.32 L172.51,72.09 L172.62,76.10 L172.71,80.39 L172.80,85.00 L172.93,94.42 L173.04,105.50 L173.13,117.72 L173.20,130.58 L173.27,143.54 L173.34,156.11 L173.42,167.77 L173.50,178.00 L173.56,184.04 L173.61,189.66 L173.67,194.96 L173.72,200.03 L173.78,204.97 L173.85,209.89 L173.92,214.86 L174.00,220.00 L174.09,225.28 L174.19,230.59 L174.30,235.92 L174.42,241.24 L174.54,246.53 L174.66,251.77 L174.78,256.93 L174.90,262.00 L175.01,266.62 L175.11,271.28 L175.22,275.93 L175.33,280.51 L175.44,284.97 L175.55,289.24 L175.67,293.27 L175.80,297.00 L175.89,299.58 L175.98,302.33 L176.08,305.09 L176.18,307.70 L176.28,310.00 L176.38,311.84 L176.49,313.06 L176.60,313.50 L176.72,313.06 L176.84,311.84 L176.97,310.00 L177.10,307.70 L177.23,305.09 L177.36,302.33 L177.48,299.58 L177.60,297.00 L177.76,293.27 L177.91,289.24 L178.05,284.97 L178.18,280.51 L178.31,275.93 L178.44,271.28 L178.57,266.62 L178.70,262.00 L178.84,256.79 L178.98,251.27 L179.12,245.60 L179.25,239.92 L179.39,234.37 L179.52,229.10 L179.66,224.26 L179.80,220.00 L179.88,217.69 L179.96,215.48 L180.04,213.38 L180.12,211.39 L180.21,209.55 L180.30,207.86 L180.39,206.34 L180.50,205.00 L180.56,204.37 L180.62,203.72 L180.68,203.10 L180.75,202.53 L180.82,202.03 L180.88,201.64 L180.94,201.39 L181.00,201.30 L181.06,201.39 L181.11,201.64 L181.16,202.02 L181.21,202.50 L181.26,203.07 L181.31,203.69 L181.36,204.34 L181.40,205.00 L181.48,206.69 L181.54,208.73 L181.59,211.06 L181.62,213.62 L181.66,216.35 L181.69,219.20 L181.74,222.10 L181.80,225.00 L181.91,229.08 L182.05,233.44 L182.20,238.03 L182.35,242.76 L182.51,247.59 L182.66,252.45 L182.79,257.27 L182.90,262.00 L182.98,266.71 L183.03,271.42 L183.06,276.13 L183.09,280.85 L183.12,285.59 L183.15,290.35 L183.21,295.16 L183.30,300.00 L183.43,305.25 L183.58,310.69 L183.75,316.23 L183.94,321.77 L184.13,327.21 L184.33,332.46 L184.52,337.43 L184.70,342.00 L184.82,345.00 L184.94,347.85 L185.05,350.57 L185.16,353.19 L185.28,355.73 L185.41,358.19 L185.55,360.61 L185.70,363.00 L185.83,364.98 L185.96,366.94 L186.09,368.87 L186.23,370.75 L186.39,372.57 L186.56,374.31 L186.76,375.96 L187.00,377.50 L187.17,378.54 L187.34,379.58 L187.51,380.59 L187.70,381.56 L187.91,382.45 L188.16,383.25 L188.45,383.94 L188.80,384.50 L189.03,384.76 L189.27,384.97 L189.53,385.15 L189.79,385.29 L190.08,385.41 L190.37,385.52 L190.68,385.61 L191.00,385.70 L191.44,385.80 L191.93,385.87 L192.44,385.92 L192.97,385.94 L193.51,385.95 L194.04,385.94 L194.54,385.92 L195.00,385.90 L195.35,385.88 L195.69,385.87 L196.03,385.86 L196.35,385.83 L196.66,385.79 L196.96,385.73 L197.24,385.63 L197.50,385.50 L197.74,385.34 L197.96,385.16 L198.16,384.96 L198.34,384.73 L198.52,384.48 L198.68,384.19 L198.84,383.86 L199.00,383.50 L199.30,382.56 L199.55,381.40 L199.75,380.07 L199.91,378.60 L200.06,377.02 L200.20,375.37 L200.34,373.68 L200.50,372.00 L200.74,369.52 L200.98,366.74 L201.21,363.79 L201.43,360.76 L201.65,357.76 L201.85,354.90 L202.03,352.28 L202.20,350.00 L202.29,348.85 L202.38,347.87 L202.46,346.99 L202.53,346.15 L202.60,345.29 L202.67,344.35 L202.74,343.27 L202.80,342.00 L202.92,338.31 L203.01,333.77 L203.08,328.57 L203.14,322.93 L203.19,317.04 L203.24,311.12 L203.31,305.37 L203.40,300.00 L203.51,295.17 L203.63,290.41 L203.77,285.69 L203.91,281.00 L204.05,276.31 L204.18,271.59 L204.30,266.83 L204.40,262.00 L204.48,256.85 L204.54,251.65 L204.59,246.40 L204.64,241.13 L204.67,235.84 L204.71,230.55 L204.75,225.26 L204.80,220.00 L204.85,214.74 L204.91,209.48 L204.96,204.20 L205.01,198.94 L205.07,193.67 L205.14,188.43 L205.21,183.20 L205.30,178.00 L205.40,172.86 L205.50,167.60 L205.62,162.31 L205.74,157.06 L205.87,151.92 L206.00,146.98 L206.15,142.32 L206.30,138.00 L206.41,134.95 L206.53,131.69 L206.66,128.42 L206.79,125.32 L206.92,122.57 L207.05,120.38 L207.18,118.93 L207.30,118.40 L207.42,118.93 L207.54,120.38 L207.66,122.57 L207.77,125.32 L207.89,128.42 L208.00,131.69 L208.10,134.95 L208.20,138.00 L208.32,142.36 L208.42,147.14 L208.51,152.22 L208.59,157.48 L208.67,162.80 L208.76,168.07 L208.87,173.18 L209.00,178.00 L209.13,181.99 L209.28,185.92 L209.44,189.79 L209.61,193.58 L209.78,197.31 L209.95,200.95 L210.13,204.52 L210.30,208.00 L210.45,211.15 L210.60,214.63 L210.75,218.21 L210.91,221.66 L211.06,224.74 L211.21,227.23 L211.36,228.89 L211.50,229.50 L211.62,229.02 L211.73,227.71 L211.84,225.73 L211.94,223.26 L212.05,220.48 L212.16,217.56 L212.27,214.68 L212.40,212.00 L212.59,208.39 L212.80,204.44 L213.02,200.26 L213.25,195.97 L213.48,191.69 L213.70,187.52 L213.91,183.59 L214.10,180.00 L214.22,177.52 L214.32,175.04 L214.41,172.61 L214.50,170.28 L214.60,168.10 L214.71,166.13 L214.84,164.41 L215.00,163.00 L215.08,162.48 L215.16,161.96 L215.25,161.47 L215.35,161.03 L215.44,160.65 L215.53,160.35 L215.62,160.17 L215.70,160.10 L215.80,160.23 L215.90,160.58 L215.99,161.11 L216.08,161.77 L216.17,162.54 L216.25,163.36 L216.33,164.19 L216.40,165.00 L216.50,166.43 L216.58,168.00 L216.64,169.71 L216.69,171.54 L216.73,173.49 L216.77,175.55 L216.83,177.72 L216.90,180.00 L217.05,184.07 L217.23,188.62 L217.44,193.55 L217.65,198.74 L217.86,204.08 L218.06,209.48 L218.25,214.82 L218.40,220.00 L218.52,225.32 L218.60,230.84 L218.66,236.45 L218.72,242.03 L218.77,247.49 L218.85,252.71 L218.95,257.58 L219.10,262.00 L219.21,264.64 L219.32,267.12 L219.44,269.47 L219.57,271.70 L219.72,273.85 L219.88,275.94 L220.07,277.98 L220.30,280.00 L220.51,281.59 L220.75,283.07 L221.01,284.48 L221.28,285.87 L221.56,287.27 L221.85,288.73 L222.13,290.29 L222.40,292.00 L222.80,294.75 L223.20,297.73 L223.61,300.90 L224.03,304.20 L224.43,307.61 L224.84,311.07 L225.23,314.55 L225.60,318.00 L226.00,321.91 L226.38,326.00 L226.75,330.20 L227.11,334.42 L227.47,338.59 L227.81,342.63 L228.16,346.46 L228.50,350.00 L228.75,352.44 L228.99,354.82 L229.22,357.12 L229.46,359.34 L229.69,361.45 L229.93,363.44 L230.16,365.30 L230.40,367.00 L230.55,368.05 L230.69,369.15 L230.83,370.23 L230.97,371.25 L231.12,372.15 L231.27,372.86 L231.43,373.33 L231.60,373.50 L231.78,373.32 L231.97,372.81 L232.17,372.05 L232.37,371.11 L232.58,370.06 L232.79,368.98 L233.00,367.94 L233.20,367.00 L233.42,366.04 L233.65,365.06 L233.88,364.06 L234.10,363.05 L234.33,362.04 L234.56,361.02 L234.78,360.01 L235.00,359.00 L235.22,358.00 L235.44,357.01 L235.66,356.02 L235.87,355.03 L236.09,354.04 L236.30,353.04 L236.50,352.02 L236.70,351.00 L236.90,349.89 L237.10,348.74 L237.29,347.57 L237.48,346.40 L237.66,345.24 L237.84,344.11 L238.02,343.02 L238.20,342.00 L238.34,341.24 L238.47,340.49 L238.60,339.77 L238.73,339.07 L238.87,338.40 L239.00,337.74 L239.15,337.11 L239.30,336.50 L239.42,336.03 L239.54,335.56 L239.66,335.10 L239.79,334.66 L239.92,334.24 L240.06,333.85 L240.22,333.50 L240.40,333.20 L240.53,333.01 L240.67,332.83 L240.82,332.67 L240.98,332.51 L241.13,332.39 L241.29,332.29 L241.45,332.22 L241.60,332.20 L241.75,332.22 L241.91,332.29 L242.07,332.39 L242.22,332.51 L242.38,332.67 L242.53,332.83 L242.67,333.01 L242.80,333.20 L242.98,333.50 L243.14,333.85 L243.28,334.24 L243.41,334.66 L243.54,335.10 L243.66,335.56 L243.78,336.03 L243.90,336.50 L244.05,337.11 L244.19,337.74 L244.33,338.40 L244.46,339.07 L244.59,339.77 L244.72,340.50 L244.86,341.24 L245.00,342.00 L245.20,343.02 L245.40,344.10 L245.61,345.22 L245.83,346.38 L246.04,347.55 L246.26,348.72 L246.48,349.87 L246.70,351.00 L246.91,352.07 L247.12,353.12 L247.33,354.17 L247.54,355.21 L247.75,356.26 L247.97,357.32 L248.18,358.40 L248.40,359.50 L248.64,360.77 L248.88,362.10 L249.12,363.45 L249.36,364.82 L249.61,366.18 L249.86,367.50 L250.13,368.79 L250.40,370.00 L250.64,371.04 L250.88,372.19 L251.13,373.35 L251.38,374.47 L251.64,375.47 L251.90,376.28 L252.15,376.81 L252.40,377.00 L252.68,376.75 L252.97,376.07 L253.25,375.06 L253.54,373.79 L253.82,372.36 L254.09,370.86 L254.35,369.38 L254.60,368.00 L254.91,366.25 L255.20,364.41 L255.47,362.49 L255.73,360.50 L255.98,358.45 L256.22,356.34 L256.46,354.19 L256.70,352.00 L256.98,349.16 L257.23,346.09 L257.46,342.88 L257.69,339.62 L257.93,336.41 L258.19,333.35 L258.47,330.51 L258.80,328.00 L259.03,326.46 L259.28,324.84 L259.54,323.23 L259.81,321.72 L260.09,320.40 L260.36,319.35 L260.63,318.65 L260.90,318.40 L261.17,318.65 L261.44,319.35 L261.71,320.40 L261.99,321.72 L262.26,323.23 L262.52,324.84 L262.77,326.46 L263.00,328.00 L263.33,330.50 L263.61,333.32 L263.86,336.36 L264.09,339.55 L264.32,342.79 L264.56,346.00 L264.81,349.10 L265.10,352.00 L265.38,354.59 L265.67,357.45 L265.97,360.40 L266.28,363.24 L266.60,365.78 L266.91,367.83 L267.21,369.20 L267.50,369.70 L267.78,369.23 L268.06,367.94 L268.34,365.99 L268.62,363.54 L268.88,360.75 L269.14,357.79 L269.38,354.82 L269.60,352.00 L269.90,347.61 L270.16,342.76 L270.39,337.56 L270.58,332.12 L270.77,326.54 L270.94,320.92 L271.11,315.37 L271.30,310.00 L271.49,304.77 L271.69,299.57 L271.88,294.37 L272.06,289.18 L272.24,283.96 L272.41,278.70 L272.56,273.38 L272.70,268.00 L272.82,262.14 L272.92,256.19 L272.99,250.17 L273.05,244.10 L273.12,238.03 L273.19,231.97 L273.28,225.95 L273.40,220.00 L273.54,214.23 L273.69,208.38 L273.85,202.52 L274.03,196.69 L274.21,190.97 L274.40,185.41 L274.60,180.07 L274.80,175.00 L274.96,171.19 L275.12,167.40 L275.28,163.68 L275.45,160.08 L275.62,156.66 L275.81,153.48 L276.00,150.57 L276.20,148.00 L276.32,146.65 L276.44,145.26 L276.56,143.90 L276.69,142.64 L276.82,141.54 L276.95,140.67 L277.07,140.10 L277.20,139.90 L277.33,140.10 L277.46,140.67 L277.59,141.54 L277.72,142.64 L277.85,143.90 L277.97,145.26 L278.09,146.65 L278.20,148.00 L278.38,150.57 L278.53,153.48 L278.66,156.66 L278.77,160.08 L278.88,163.68 L278.98,167.40 L279.09,171.19 L279.20,175.00 L279.35,180.07 L279.49,185.41 L279.63,190.97 L279.77,196.69 L279.91,202.52 L280.04,208.38 L280.17,214.23 L280.30,220.00 L280.43,225.95 L280.57,231.97 L280.70,238.03 L280.82,244.10 L280.95,250.17 L281.07,256.19 L281.19,262.14 L281.30,268.00 L281.39,273.38 L281.47,278.70 L281.55,283.96 L281.62,289.18 L281.70,294.37 L281.78,299.57 L281.88,304.77 L282.00,310.00 L282.12,315.46 L282.22,321.23 L282.33,327.12 L282.45,332.95 L282.60,338.54 L282.80,343.69 L283.06,348.24 L283.40,352.00 L283.59,353.56 L283.79,355.11 L284.00,356.61 L284.22,357.98 L284.46,359.15 L284.70,360.08 L284.95,360.68 L285.20,360.90 L285.47,360.68 L285.76,360.04 L286.06,359.07 L286.37,357.85 L286.68,356.46 L286.97,354.96 L287.25,353.45 L287.50,352.00 L287.84,349.48 L288.12,346.53 L288.35,343.29 L288.55,339.92 L288.74,336.56 L288.93,333.36 L289.15,330.46 L289.40,328.00 L289.56,326.70 L289.73,325.35 L289.90,324.03 L290.07,322.79 L290.25,321.72 L290.43,320.86 L290.61,320.30 L290.80,320.10 L290.99,320.32 L291.20,320.92 L291.41,321.83 L291.62,322.95 L291.83,324.22 L292.03,325.53 L292.22,326.82 L292.40,328.00 L292.60,329.38 L292.78,330.82 L292.94,332.31 L293.10,333.84 L293.24,335.39 L293.39,336.94 L293.54,338.48 L293.70,340.00 L293.86,341.51 L294.02,343.03 L294.17,344.55 L294.33,346.07 L294.49,347.58 L294.65,349.08 L294.82,350.55 L295.00,352.00 L295.17,353.29 L295.35,354.54 L295.54,355.76 L295.73,356.98 L295.92,358.19 L296.11,359.43 L296.31,360.69 L296.50,362.00 L296.72,363.56 L296.93,365.20 L297.15,366.88 L297.37,368.58 L297.59,370.27 L297.82,371.92 L298.06,373.51 L298.30,375.00 L298.50,376.23 L298.70,377.57 L298.91,378.93 L299.12,380.24 L299.33,381.41 L299.55,382.34 L299.77,382.97 L300.00,383.20 L300.24,382.98 L300.48,382.35 L300.72,381.42 L300.97,380.25 L301.23,378.94 L301.48,377.57 L301.74,376.23 L302.00,375.00 L302.33,373.54 L302.68,372.03 L303.04,370.47 L303.40,368.87 L303.75,367.22 L304.09,365.53 L304.41,363.79 L304.70,362.00 L305.01,359.76 L305.29,357.47 L305.53,355.12 L305.76,352.69 L305.97,350.18 L306.17,347.57 L306.38,344.85 L306.60,342.00 L306.91,337.63 L307.21,332.76 L307.50,327.57 L307.79,322.24 L308.08,316.94 L308.37,311.85 L308.68,307.14 L309.00,303.00 L309.21,300.63 L309.43,298.41 L309.65,296.30 L309.88,294.30 L310.11,292.39 L310.33,290.55 L310.57,288.76 L310.80,287.00 L310.98,285.55 L311.17,283.98 L311.35,282.38 L311.54,280.85 L311.73,279.49 L311.92,278.39 L312.11,277.67 L312.30,277.40 L312.50,277.66 L312.70,278.39 L312.90,279.48 L313.11,280.84 L313.31,282.37 L313.51,283.97 L313.71,285.55 L313.90,287.00 L314.13,288.75 L314.36,290.55 L314.59,292.39 L314.80,294.30 L315.02,296.30 L315.22,298.41 L315.41,300.63 L315.60,303.00 L315.86,307.14 L316.09,311.85 L316.29,316.94 L316.47,322.24 L316.66,327.57 L316.85,332.76 L317.06,337.63 L317.30,342.00 L317.49,344.85 L317.67,347.59 L317.87,350.21 L318.06,352.74 L318.27,355.17 L318.50,357.52 L318.74,359.79 L319.00,362.00 L319.22,363.67 L319.46,365.31 L319.71,366.89 L319.96,368.43 L320.22,369.91 L320.48,371.33 L320.74,372.70 L321.00,374.00 L321.18,374.92 L321.36,375.81 L321.53,376.66 L321.70,377.48 L321.88,378.27 L322.07,379.04 L322.28,379.78 L322.50,380.50 L322.69,381.08 L322.89,381.67 L323.09,382.24 L323.30,382.80 L323.53,383.32 L323.77,383.80 L324.02,384.23 L324.30,384.60 L324.51,384.82 L324.72,385.02 L324.94,385.20 L325.16,385.35 L325.40,385.48 L325.65,385.60 L325.92,385.71 L326.20,385.80 L326.60,385.89 L327.04,385.94 L327.51,385.96 L328.01,385.95 L328.51,385.94 L329.01,385.91 L329.51,385.90 L330.00,385.90 L330.25,385.99 L330.50,385.99 L330.75,385.99 L331.00,385.99 L331.25,385.99 L331.50,385.99 L331.75,385.99 L332.00,385.99 L332.25,385.99 L332.50,385.99 L332.75,385.99 L333.00,385.99 L333.25,385.99 L333.50,385.99 L333.75,385.99 L334.00,385.99 L334.25,385.99 L334.50,385.99 L334.75,385.99 L335.00,385.99 L335.25,385.99 L335.50,385.99 L335.75,385.99 L336.00,385.99 L336.25,385.99 L336.50,385.99 L336.75,385.99 L337.00,385.99 L337.25,385.99 L337.50,385.99 L337.75,385.99 L338.00,385.98 L338.25,385.98 L338.50,385.98 L338.75,385.97 L339.00,385.97 L339.25,385.96 L339.50,385.95 L339.75,385.94 L340.00,385.93 L340.25,385.92 L340.50,385.90 L340.75,385.88 L341.00,385.86 L341.25,385.83 L341.50,385.79 L341.75,385.75 L342.00,385.69 L342.25,385.63 L342.50,385.56 L342.75,385.48 L343.00,385.38 L343.25,385.27 L343.50,385.14 L343.75,384.99 L344.00,384.81 L344.25,384.61 L344.50,384.39 L344.75,384.13 L345.00,383.84 L345.25,383.51 L345.50,383.15 L345.75,382.74 L346.00,382.29 L346.25,381.80 L346.50,381.25 L346.75,380.65 L347.00,380.00 L347.25,379.30 L347.50,378.54 L347.75,377.73 L348.00,376.86 L348.25,375.93 L348.50,374.96 L348.75,373.93 L349.00,372.86 L349.25,371.75 L349.50,370.60 L349.75,369.42 L350.00,368.21 L350.25,366.98 L350.50,365.75 L350.75,364.52 L351.00,363.30 L351.25,362.09 L351.50,360.92 L351.75,359.78 L352.00,358.70 L352.25,357.67 L352.50,356.72 L352.75,355.85 L353.00,355.06 L353.25,354.38 L353.50,353.79 L353.75,353.32 L354.00,352.96 L354.25,352.73 L354.50,352.61 L354.75,352.62 L355.00,352.75 L355.25,353.00 L355.50,353.37 L355.75,353.86 L356.00,354.45 L356.25,355.14 L356.50,355.93 L356.75,356.80 L357.00,357.75 L357.25,358.76 L357.50,359.83 L357.75,360.94 L358.00,362.08 L358.25,363.25 L358.50,364.43 L358.75,365.61 L359.00,366.77 L359.25,367.92 L359.50,369.04 L359.75,370.12 L360.00,371.16 L360.25,372.15 L360.50,373.07 L360.75,373.94 L361.00,374.73 L361.25,375.45 L361.50,376.09 L361.75,376.65 L362.00,377.13 L362.25,377.52 L362.50,377.83 L362.75,378.05 L363.00,378.18 L363.25,378.23 L363.50,378.18 L363.75,378.04 L364.00,377.82 L364.25,377.50 L364.50,377.10 L364.75,376.60 L365.00,376.02 L365.25,375.34 L365.50,374.58 L365.75,373.73 L366.00,372.79 L366.25,371.76 L366.50,370.64 L366.75,369.44 L367.00,368.15 L367.25,366.77 L367.50,365.32 L367.75,363.78 L368.00,362.17 L368.25,360.48 L368.50,358.72 L368.75,356.89 L369.00,355.00 L369.25,353.06 L369.50,351.06 L369.75,349.01 L370.00,346.93 L370.25,344.81 L370.50,342.67 L370.75,340.52 L371.00,338.36 L371.25,336.20 L371.50,334.05 L371.75,331.93 L372.00,329.84 L372.25,327.80 L372.50,325.81 L372.75,323.88 L373.00,322.03 L373.25,320.27 L373.50,318.60 L373.75,317.03 L374.00,315.59 L374.25,314.26 L374.50,313.07 L374.75,312.01 L375.00,311.10 L375.25,310.34 L375.50,309.74 L375.75,309.30 L376.00,309.02 L376.25,308.90 L376.50,308.95 L376.75,309.17 L377.00,309.54 L377.25,310.08 L377.50,310.78 L377.75,311.63 L378.00,312.62 L378.25,313.76 L378.50,315.04 L378.75,316.43 L379.00,317.95 L379.25,319.58 L379.50,321.30 L379.75,323.12 L380.00,325.02 L380.25,326.98 L380.50,329.00 L380.75,331.07 L381.00,333.18 L381.25,335.32 L381.50,337.47 L381.75,339.63 L382.00,341.78 L382.25,343.93 L382.50,346.05 L382.75,348.15 L383.00,350.21 L383.25,352.23 L383.50,354.20 L383.75,356.11 L384.00,357.97 L384.25,359.76 L384.50,361.48 L384.75,363.14 L385.00,364.72 L385.25,366.22 L385.50,367.65 L385.75,369.00 L386.00,370.27 L386.25,371.46 L386.50,372.58 L386.75,373.62 L387.00,374.58 L387.25,375.46 L387.50,376.28 L387.75,377.02 L388.00,377.69 L388.25,378.29 L388.50,378.82 L388.75,379.29 L389.00,379.70 L389.25,380.04 L389.50,380.32 L389.75,380.55 L390.00,380.72 L390.25,380.83 L390.50,380.90 L390.75,380.90 L391.00,380.86 L391.25,380.77 L391.50,380.63 L391.75,380.43 L392.00,380.19 L392.25,379.90 L392.50,379.57 L392.75,379.18 L393.00,378.75 L393.25,378.27 L393.50,377.74 L393.75,377.16 L394.00,376.53 L394.25,375.86 L394.50,375.13 L394.75,374.36 L395.00,373.54 L395.25,372.67 L395.50,371.75 L395.75,370.78 L396.00,369.76 L396.25,368.70 L396.50,367.58 L396.75,366.42 L397.00,365.21 L397.25,363.96 L397.50,362.67 L397.75,361.33 L398.00,359.96 L398.25,358.54 L398.50,357.09 L398.75,355.61 L399.00,354.10 L399.25,352.56 L399.50,351.00 L399.75,349.42 L400.00,347.82 L400.25,346.22 L400.50,344.60 L400.75,342.99 L401.00,341.38 L401.25,339.77 L401.50,338.18 L401.75,336.61 L402.00,335.06 L402.25,333.53 L402.50,332.05 L402.75,330.60 L403.00,329.20 L403.25,327.85 L403.50,326.55 L403.75,325.32 L404.00,324.15 L404.25,323.05 L404.50,322.03 L404.75,321.08 L405.00,320.22 L405.25,319.45 L405.50,318.77 L405.75,318.18 L406.00,317.69 L406.25,317.29 L406.50,316.99 L406.75,316.80 L407.00,316.71 L407.25,316.72 L407.50,316.83 L407.75,317.05 L408.00,317.36 L408.25,317.78 L408.50,318.29 L408.75,318.90 L409.00,319.60 L409.25,320.39 L409.50,321.26 L409.75,322.22 L410.00,323.26 L410.25,324.37 L410.50,325.56 L410.75,326.80 L411.00,328.11 L411.25,329.47 L411.50,330.88 L411.75,332.34 L412.00,333.83 L412.25,335.36 L412.50,336.92 L412.75,338.49 L413.00,340.09 L413.25,341.70 L413.50,343.31 L413.75,344.93 L414.00,346.54 L414.25,348.15 L414.50,349.74 L414.75,351.32 L415.00,352.88 L415.25,354.41 L415.50,355.92 L415.75,357.40 L416.00,358.84 L416.25,360.25 L416.50,361.63 L416.75,362.96 L417.00,364.25 L417.25,365.51 L417.50,366.71 L417.75,367.88 L418.00,368.99 L418.25,370.06 L418.50,371.09 L418.75,372.07 L419.00,373.01 L419.25,373.90 L419.50,374.74 L419.75,375.54 L420.00,376.30 L420.25,377.02 L420.50,377.69 L420.75,378.33 L421.00,378.92 L421.25,379.48 L421.50,380.00 L421.75,380.49 L422.00,380.94 L422.25,381.37 L422.50,381.76 L422.75,382.12 L423.00,382.45 L423.25,382.76 L423.50,383.04 L423.75,383.30 L424.00,383.54 L424.25,383.76 L424.50,383.95 L424.75,384.13 L425.00,384.28 L425.25,384.43 L425.50,384.55 L425.75,384.66 L426.00,384.75 L426.25,384.83 L426.50,384.90 L426.75,384.95 L427.00,385.00 L427.25,385.03 L427.50,385.04 L427.75,385.05 L428.00,385.04 L428.25,385.03 L428.50,385.00 L428.75,384.96 L429.00,384.91 L429.25,384.84 L429.50,384.77 L429.75,384.68 L430.00,384.58 L430.25,384.46 L430.50,384.33 L430.75,384.19 L431.00,384.03 L431.25,383.85 L431.50,383.66 L431.75,383.45 L432.00,383.22 L432.25,382.97 L432.50,382.70 L432.75,382.41 L433.00,382.09 L433.25,381.76 L433.50,381.39 L433.75,381.00 L434.00,380.59 L434.25,380.14 L434.50,379.67 L434.75,379.17 L435.00,378.64 L435.25,378.07 L435.50,377.47 L435.75,376.84 L436.00,376.17 L436.25,375.47 L436.50,374.74 L436.75,373.96 L437.00,373.16 L437.25,372.31 L437.50,371.43 L437.75,370.51 L438.00,369.55 L438.25,368.56 L438.50,367.53 L438.75,366.47 L439.00,365.37 L439.25,364.24 L439.50,363.08 L439.75,361.89 L440.00,360.66 L440.25,359.41 L440.50,358.14 L440.75,356.84 L441.00,355.52 L441.25,354.19 L441.50,352.84 L441.75,351.48 L442.00,350.10 L442.25,348.73 L442.50,347.35 L442.75,345.97 L443.00,344.60 L443.25,343.23 L443.50,341.88 L443.75,340.55 L444.00,339.24 L444.25,337.95 L444.50,336.69 L444.75,335.47 L445.00,334.28 L445.25,333.13 L445.50,332.03 L445.75,330.98 L446.00,329.99 L446.25,329.04 L446.50,328.16 L446.75,327.35 L447.00,326.59 L447.25,325.91 L447.50,325.30 L447.75,324.77 L448.00,324.31 L448.25,323.92 L448.50,323.62 L448.75,323.40 L449.00,323.26 L449.25,323.20 L449.50,323.23 L449.75,323.33 L450.00,323.52 L450.25,323.79 L450.50,324.14 L450.75,324.57 L451.00,325.07 L451.25,325.65 L451.50,326.30 L451.75,327.03 L452.00,327.82 L452.25,328.67 L452.50,329.59 L452.75,330.56 L453.00,331.59 L453.25,332.67 L453.50,333.79 L453.75,334.96 L454.00,336.16 L454.25,337.40 L454.50,338.68 L454.75,339.97 L455.00,341.29 L455.25,342.63 L455.50,343.98 L455.75,345.34 L456.00,346.70 L456.25,348.07 L456.50,349.43 L456.75,350.79 L457.00,352.14 L457.25,353.48 L457.50,354.80 L457.75,356.10 L458.00,357.37 L458.25,358.63 L458.50,359.85 L458.75,361.05 L459.00,362.21 L459.25,363.34 L459.50,364.44 L459.75,365.49 L460.00,366.51 L460.25,367.48 L460.50,368.42 L460.75,369.30 L461.00,370.15 L461.25,370.95 L461.50,371.71 L461.75,372.42 L462.00,373.08 L462.25,373.69 L462.50,374.26 L462.75,374.78 L463.00,375.25 L463.25,375.68 L463.50,376.05 L463.75,376.38 L464.00,376.66 L464.25,376.89 L464.50,377.08 L464.75,377.21 L465.00,377.30 L465.25,377.35 L465.50,377.34 L465.75,377.29 L466.00,377.19 L466.25,377.04 L466.50,376.85 L466.75,376.61 L467.00,376.33 L467.25,376.00 L467.50,375.62 L467.75,375.20 L468.00,374.73 L468.25,374.22 L468.50,373.67 L468.75,373.07 L469.00,372.42 L469.25,371.74 L469.50,371.01 L469.75,370.25 L470.00,369.44 L470.25,368.59 L470.50,367.71 L470.75,366.79 L471.00,365.83 L471.25,364.84 L471.50,363.82 L471.75,362.76 L472.00,361.68 L472.25,360.57 L472.50,359.43 L472.75,358.27 L473.00,357.09 L473.25,355.90 L473.50,354.68 L473.75,353.46 L474.00,352.23 L474.25,350.99 L474.50,349.74 L474.75,348.50 L475.00,347.26 L475.25,346.02 L475.50,344.80 L475.75,343.59 L476.00,342.40 L476.25,341.23 L476.50,340.08 L476.75,338.96 L477.00,337.87 L477.25,336.82 L477.50,335.81 L477.75,334.84 L478.00,333.91 L478.25,333.04 L478.50,332.21 L478.75,331.44 L479.00,330.73 L479.25,330.07 L479.50,329.48 L479.75,328.96 L480.00,328.50 L480.25,328.10 L480.50,327.78 L480.75,327.53 L481.00,327.35 L481.25,327.24 L481.50,327.20 L481.75,327.24 L482.00,327.35 L482.25,327.53 L482.50,327.78 L482.75,328.10 L483.00,328.50 L483.25,328.96 L483.50,329.49 L483.75,330.08 L484.00,330.73 L484.25,331.45 L484.50,332.22 L484.75,333.05 L485.00,333.92 L485.25,334.85 L485.50,335.82 L485.75,336.84 L486.00,337.89 L486.25,338.98 L486.50,340.10 L486.75,341.26 L487.00,342.43 L487.25,343.63 L487.50,344.84 L487.75,346.07 L488.00,347.32 L488.25,348.57 L488.50,349.82 L488.75,351.07 L489.00,352.33 L489.25,353.57 L489.50,354.81 L489.75,356.04 L490.00,357.26 L490.25,358.46 L490.50,359.65 L490.75,360.81 L491.00,361.95 L491.25,363.07 L491.50,364.17 L491.75,365.23 L492.00,366.27 L492.25,367.28 L492.50,368.26 L492.75,369.21 L493.00,370.13 L493.25,371.02 L493.50,371.87 L493.75,372.70 L494.00,373.49 L494.25,374.24 L494.50,374.97 L494.75,375.66 L495.00,376.32 L495.25,376.95 L495.50,377.55 L495.75,378.12 L496.00,378.66 L496.25,379.17 L496.50,379.65 L496.75,380.11 L497.00,380.54 L497.25,380.94 L497.50,381.32 L497.75,381.68 L498.00,382.01 L498.25,382.32 L498.50,382.62 L498.75,382.89 L499.00,383.14 L499.25,383.38 L499.50,383.60 L499.75,383.80 L500.00,383.99 L500.25,384.16 L500.50,384.32 L500.75,384.47 L501.00,384.61 L501.25,384.73 L501.50,384.85 L501.75,384.95 L502.00,385.05 L502.25,385.14 L502.50,385.22 L502.75,385.29 L503.00,385.36 L503.25,385.42 L503.50,385.47 L503.75,385.52 L504.00,385.57 L504.25,385.61 L504.50,385.65 L504.75,385.68 L505.00,385.71 L505.25,385.74 L505.50,385.76 L505.75,385.79 L506.00,385.80 L506.25,385.82 L506.50,385.84 L506.75,385.85 L507.00,385.86 L507.25,385.88 L507.50,385.89 L507.75,385.89 L508.00,385.90 L508.25,385.91 L508.50,385.91 L508.75,385.92 L509.00,385.92 L509.25,385.93 L509.50,385.93 L509.75,385.94 L510.00,385.94 L510.25,385.94 L510.50,385.94 L510.75,385.94 L511.00,385.95 L511.25,385.95 L511.50,385.95 L511.75,385.95 L512.00,385.95 L512.25,385.95 L512.50,385.95 L512.75,385.95 L513.00,385.95 L513.25,385.95 L513.50,385.95 L513.75,385.95 L514.00,385.95 L514.25,385.95 L514.50,385.95 L514.75,385.95 L515.00,385.95 L515.25,385.95 L515.50,385.95 L515.75,385.95 L516.00,385.96 L516.25,385.96 L516.50,385.96 L516.75,385.96 L517.00,385.96 L517.25,385.96 L517.50,385.96 L517.75,385.95 L518.00,385.95 L518.25,385.95 L518.50,385.95 L518.75,385.95 L519.00,385.95 L519.25,385.95 L519.50,385.95 L519.75,385.95 L520.00,385.95 L520.25,385.95 L520.50,385.95 L520.75,385.95 L521.00,385.95 L521.25,385.95 L521.50,385.95 L521.75,385.95 L522.00,385.95 L522.25,385.95 L522.50,385.95 L522.75,385.95 L523.00,385.95 L523.25,385.95 L523.50,385.95 L523.75,385.95 L524.00,385.95 L524.25,385.95 L524.50,385.95 L524.75,385.95 L525.00,385.95 L525.25,385.95 L525.50,385.95 L525.75,385.95 L526.00,385.95 L526.25,385.95 L526.50,385.95 L526.75,385.95 L527.00,385.95 L527.25,385.95 L527.50,385.95 L527.75,385.95 L528.00,385.95 L528.25,385.95 L528.50,385.95 L528.75,385.95 L529.00,385.95 L529.25,385.95 L529.50,385.95 L529.75,385.95 L530.00,385.95 L530.25,385.95 L530.50,385.95 L530.75,385.95 L531.00,385.95 L531.25,385.95 L531.50,385.95 L531.75,385.95 L532.00,385.95 L532.25,385.95 L532.50,385.95 L532.75,385.95 L533.00,385.95 L533.25,385.95 L533.50,385.95 L533.75,385.95 L534.00,385.94 L534.25,385.94 L534.50,385.94 L534.75,385.94 L535.00,385.94 L535.25,385.94 L535.50,385.94 L535.75,385.94 L536.00,385.93 L536.25,385.93 L536.50,385.93 L536.75,385.93 L537.00,385.92 L537.25,385.92 L537.50,385.92 L537.75,385.91 L538.00,385.91 L538.25,385.91 L538.50,385.90 L538.75,385.90 L539.00,385.89 L539.25,385.88 L539.50,385.88 L539.75,385.87 L540.00,385.86 L540.25,385.85 L540.50,385.84 L540.75,385.83 L541.00,385.81 L541.25,385.80 L541.50,385.79 L541.75,385.77 L542.00,385.75 L542.25,385.73 L542.50,385.71 L542.75,385.69 L543.00,385.66 L543.25,385.64 L543.50,385.61 L543.75,385.58 L544.00,385.54 L544.25,385.51 L544.50,385.47 L544.75,385.43 L545.00,385.38 L545.25,385.33 L545.50,385.28 L545.75,385.22 L546.00,385.16 L546.25,385.10 L546.50,385.03 L546.75,384.95 L547.00,384.87 L547.25,384.79 L547.50,384.70 L547.75,384.60 L548.00,384.50 L548.25,384.38 L548.50,384.27 L548.75,384.14 L549.00,384.01 L549.25,383.87 L549.50,383.72 L549.75,383.56 L550.00,383.40 L550.25,383.22 L550.50,383.03 L550.75,382.84 L551.00,382.63 L551.25,382.41 L551.50,382.18 L551.75,381.94 L552.00,381.69 L552.25,381.42 L552.50,381.14 L552.75,380.85 L553.00,380.54 L553.25,380.23 L553.50,379.89 L553.75,379.54 L554.00,379.18 L554.25,378.81 L554.50,378.41 L554.75,378.01 L555.00,377.58 L555.25,377.15 L555.50,376.69 L555.75,376.22 L556.00,375.74 L556.25,375.24 L556.50,374.72 L556.75,374.19 L557.00,373.64 L557.25,373.08 L557.50,372.50 L557.75,371.91 L558.00,371.30 L558.25,370.68 L558.50,370.04 L558.75,369.39 L559.00,368.73 L559.25,368.05 L559.50,367.37 L559.75,366.67 L560.00,365.96 L560.25,365.24 L560.50,364.52 L560.75,363.78 L561.00,363.04 L561.25,362.30 L561.50,361.54 L561.75,360.79 L562.00,360.03 L562.25,359.26 L562.50,358.50 L562.75,357.74 L563.00,356.98 L563.25,356.22 L563.50,355.47 L563.75,354.72 L564.00,353.98 L564.25,353.25 L564.50,352.53 L564.75,351.82 L565.00,351.12 L565.25,350.43 L565.50,349.76 L565.75,349.11 L566.00,348.47 L566.25,347.85 L566.50,347.26 L566.75,346.68 L567.00,346.13 L567.25,345.60 L567.50,345.10 L567.75,344.62 L568.00,344.17 L568.25,343.75 L568.50,343.36 L568.75,343.00 L569.00,342.67 L569.25,342.37 L569.50,342.11 L569.75,341.87 L570.00,341.68 L570.25,341.51 L570.50,341.38 L570.75,341.29 L571.00,341.23 L571.25,341.20 L571.50,341.21 L571.75,341.26 L572.00,341.34 L572.25,341.45 L572.50,341.60 L572.75,341.79 L573.00,342.01 L573.25,342.26 L573.50,342.55 L573.75,342.86 L574.00,343.21 L574.25,343.59 L574.50,344.00 L574.75,344.44 L575.00,344.90 L575.25,345.40 L575.50,345.91 L575.75,346.46 L576.00,347.02 L576.25,347.61 L576.50,348.22 L576.75,348.85 L577.00,349.50 L577.25,350.16 L577.50,350.84 L577.75,351.53 L578.00,352.24 L578.25,352.96 L578.50,353.69 L578.75,354.42 L579.00,355.17 L579.25,355.92 L579.50,356.67 L579.75,357.43 L580.00,358.19 L580.25,358.96 L580.50,359.72 L580.75,360.48 L581.00,361.24 L581.25,361.99 L581.50,362.74 L581.75,363.48 L582.00,364.22 L582.25,364.95 L582.50,365.67 L582.75,366.38 L583.00,367.09 L583.25,367.78 L583.50,368.46 L583.75,369.12 L584.00,369.78 L584.25,370.42 L584.50,371.05 L584.75,371.66 L585.00,372.26 L585.25,372.84 L585.50,373.41 L585.75,373.96 L586.00,374.50 L586.25,375.03 L586.50,375.53 L586.75,376.02 L587.00,376.50 L587.25,376.96 L587.50,377.40 L587.75,377.83 L588.00,378.25 L588.25,378.64 L588.50,379.03 L588.75,379.39 L589.00,379.75 L589.25,380.09 L589.50,380.41 L589.75,380.72 L590.00,381.02 L590.25,381.30 L590.50,381.57 L590.75,381.83 L591.00,382.08 L591.25,382.31 L591.50,382.53 L591.75,382.75 L592.00,382.95 L592.25,383.14 L592.50,383.32 L592.75,383.49 L593.00,383.65 L593.25,383.80 L593.50,383.95 L593.75,384.08 L594.00,384.21 L594.25,384.33 L594.50,384.44 L594.75,384.55 L595.00,384.65 L595.25,384.74 L595.50,384.83 L595.75,384.91 L596.00,384.99 L596.25,385.06 L596.50,385.13 L596.75,385.19 L597.00,385.25 L597.25,385.30 L597.50,385.35 L597.75,385.40 L598.00,385.44 L598.25,385.48 L598.50,385.52 L598.75,385.55 L599.00,385.59 L599.25,385.62 L599.50,385.64 L599.75,385.67 L600.00,385.69 L600.25,385.71 L600.50,385.73 L600.75,385.75 L601.00,385.77 L601.25,385.78 L601.50,385.80 L601.75,385.81 L602.00,385.82 L602.25,385.83 L602.50,385.84 L602.75,385.85 L603.00,385.86 L603.25,385.87 L603.50,385.87 L603.75,385.88 L604.00,385.88 L604.25,385.89 L604.50,385.89 L604.75,385.90 L605.00,385.90 L605.25,385.91 L605.50,385.91 L605.75,385.91 L606.00,385.91 L606.25,385.92 L606.50,385.92 L606.75,385.92 L607.00,385.92 L607.25,385.92 L607.50,385.93 L607.75,385.93 L608.00,385.93 L608.25,385.93 L608.50,385.93 L608.75,385.93 L609.00,385.93 L609.25,385.93 L609.50,385.93 L609.75,385.93 L610.00,385.93 L610.25,385.93 L610.50,385.93 L610.75,385.93 L611.00,385.93 L611.25,385.93 L611.50,385.93 L611.75,385.93 L612.00,385.93 L612.25,385.93 L612.50,385.93 L612.75,385.93 L613.00,385.93 L613.25,385.93 L613.50,385.93 L613.75,385.93 L614.00,385.93 L614.25,385.93 L614.50,385.93 L614.75,385.93 L615.00,385.93 L615.25,385.93 L615.50,385.93 L615.75,385.93 L616.00,385.93 L616.25,385.93 L616.50,385.93 L616.75,385.93 L617.00,385.93 L617.25,385.93 L617.50,385.93 L617.75,385.93 L618.00,385.93 L618.25,385.93 L618.50,385.93 L618.75,385.93 L619.00,385.93 L619.25,385.93 L619.50,385.93 L619.75,385.93 L620.00,385.93 L620.25,385.93 L620.50,385.93 L620.75,385.93 L621.00,385.93 L621.25,385.93 L621.50,385.93 L621.75,385.93 L622.00,385.93 L622.25,385.93 L622.50,385.93 L622.75,385.93 L623.00,385.93 L623.25,385.93 L623.50,385.93 L623.75,385.93 L624.00,385.93 L624.25,385.93 L624.50,385.93 L624.75,385.93 L625.00,385.93 L625.25,385.93 L625.50,385.93 L625.75,385.93 L626.00,385.93 L626.25,385.93 L626.50,385.93 L626.75,385.93 L627.00,385.93 L627.25,385.93 L627.50,385.93 L627.75,385.93 L628.00,385.93 L628.25,385.93 L628.50,385.93 L628.75,385.93 L629.00,385.93 L629.25,385.93 L629.50,385.93 L629.75,385.93 L630.00,385.93 L630.25,385.93 L630.50,385.93 L630.75,385.93 L631.00,385.92 L631.25,385.92 L631.50,385.92 L631.75,385.92 L632.00,385.92 L632.25,385.92 L632.50,385.92 L632.75,385.92 L633.00,385.91 L633.25,385.91 L633.50,385.91 L633.75,385.91 L634.00,385.91 L634.25,385.90 L634.50,385.90 L634.75,385.90 L635.00,385.89 L635.25,385.89 L635.50,385.88 L635.75,385.88 L636.00,385.87 L636.25,385.87 L636.50,385.86 L636.75,385.85 L637.00,385.85 L637.25,385.84 L637.50,385.83 L637.75,385.82 L638.00,385.81 L638.25,385.80 L638.50,385.79 L638.75,385.77 L639.00,385.76 L639.25,385.74 L639.50,385.73 L639.75,385.71 L640.00,385.69 L640.25,385.67 L640.50,385.64 L640.75,385.62 L641.00,385.59 L641.25,385.56 L641.50,385.53 L641.75,385.50 L642.00,385.46 L642.25,385.42 L642.50,385.38 L642.75,385.34 L643.00,385.29 L643.25,385.24 L643.50,385.18 L643.75,385.13 L644.00,385.06 L644.25,385.00 L644.50,384.93 L644.75,384.85 L645.00,384.77 L645.25,384.69 L645.50,384.60 L645.75,384.50 L646.00,384.40 L646.25,384.29 L646.50,384.18 L646.75,384.06 L647.00,383.93 L647.25,383.79 L647.50,383.65 L647.75,383.50 L648.00,383.34 L648.25,383.18 L648.50,383.00 L648.75,382.81 L649.00,382.62 L649.25,382.42 L649.50,382.20 L649.75,381.98 L650.00,381.74 L650.25,381.50 L650.50,381.24 L650.75,380.97 L651.00,380.70 L651.25,380.40 L651.50,380.10 L651.75,379.78 L652.00,379.45 L652.25,379.11 L652.50,378.76 L652.75,378.39 L653.00,378.01 L653.25,377.61 L653.50,377.20 L653.75,376.78 L654.00,376.35 L654.25,375.89 L654.50,375.43 L654.75,374.95 L655.00,374.46 L655.25,373.96 L655.50,373.44 L655.75,372.90 L656.00,372.36 L656.25,371.80 L656.50,371.23 L656.75,370.64 L657.00,370.05 L657.25,369.44 L657.50,368.82 L657.75,368.19 L658.00,367.54 L658.25,366.89 L658.50,366.23 L658.75,365.56 L659.00,364.88 L659.25,364.20 L659.50,363.50 L659.75,362.81 L660.00,362.10 L660.25,361.39 L660.50,360.68 L660.75,359.97 L661.00,359.25 L661.25,358.53 L661.50,357.82 L661.75,357.10 L662.00,356.39 L662.25,355.68 L662.50,354.97 L662.75,354.27 L663.00,353.58 L663.25,352.89 L663.50,352.22 L663.75,351.55 L664.00,350.89 L664.25,350.25 L664.50,349.62 L664.75,349.00 L665.00,348.40 L665.25,347.82 L665.50,347.25 L665.75,346.70 L666.00,346.18 L666.25,345.67 L666.50,345.18 L666.75,344.72 L667.00,344.28 L667.25,343.87 L667.50,343.48 L667.75,343.12 L668.00,342.78 L668.25,342.47 L668.50,342.19 L668.75,341.94 L669.00,341.71 L669.25,341.52 L669.50,341.36 L669.75,341.22 L670.00,341.12 L670.25,341.05 L670.50,341.01 L670.75,341.00 L671.00,341.02 L671.25,341.08 L671.50,341.16 L671.75,341.27 L672.00,341.42 L672.25,341.59 L672.50,341.80 L672.75,342.03 L673.00,342.30 L673.25,342.59 L673.50,342.91 L673.75,343.26 L674.00,343.63 L674.25,344.03 L674.50,344.45 L674.75,344.90 L675.00,345.37 L675.25,345.87 L675.50,346.38 L675.75,346.92 L676.00,347.47 L676.25,348.05 L676.50,348.64 L676.75,349.24 L677.00,349.87 L677.25,350.50 L677.50,351.15 L677.75,351.81 L678.00,352.48 L678.25,353.16 L678.50,353.85 L678.75,354.55 L679.00,355.25 L679.25,355.96 L679.50,356.67 L679.75,357.38 L680.00,358.10 L680.25,358.82 L680.50,359.53 L680.75,360.25 L681.00,360.96 L681.25,361.67 L681.50,362.38 L681.75,363.08 L682.00,363.78 L682.25,364.47 L682.50,365.15 L682.75,365.82 L683.00,366.49 L683.25,367.15 L683.50,367.80 L683.75,368.43 L684.00,369.06 L684.25,369.68 L684.50,370.28 L684.75,370.87 L685.00,371.45 L685.25,372.02 L685.50,372.57 L685.75,373.11 L686.00,373.64 L686.25,374.15 L686.50,374.65 L686.75,375.14 L687.00,375.61 L687.25,376.07 L687.50,376.51 L687.75,376.94 L688.00,377.36 L688.25,377.76 L688.50,378.15 L688.75,378.53 L689.00,378.89 L689.25,379.24 L689.50,379.58 L689.75,379.90 L690.00,380.21 L690.25,380.51 L690.50,380.79 L690.75,381.07 L691.00,381.33 L691.25,381.58 L691.50,381.82 L691.75,382.05 L692.00,382.27 L692.25,382.48 L692.50,382.68 L692.75,382.87 L693.00,383.04 L693.25,383.21 L693.50,383.38 L693.75,383.53 L694.00,383.67 L694.25,383.81 L694.50,383.94 L694.75,384.06 L695.00,384.18 L695.25,384.28 L695.50,384.39 L695.75,384.48 L696.00,384.57 L696.25,384.65 L696.50,384.73 L696.75,384.80 L697.00,384.87 L697.25,384.93 L697.50,384.98 L697.75,385.04 L698.00,385.08 L698.25,385.13 L698.50,385.16 L698.75,385.20 L699.00,385.23 L699.25,385.25 L699.50,385.28 L699.75,385.29 L700.00,385.31 L700.25,385.32 L700.50,385.33 L700.75,385.33 L701.00,385.33 L701.25,385.32 L701.50,385.32 L701.75,385.30 L702.00,385.29 L702.25,385.27 L702.50,385.25 L702.75,385.22 L703.00,385.19 L703.25,385.15 L703.50,385.11 L703.75,385.07 L704.00,385.02 L704.25,384.96 L704.50,384.90 L704.75,384.84 L705.00,384.77 L705.25,384.69 L705.50,384.61 L705.75,384.52 L706.00,384.43 L706.25,384.33 L706.50,384.22 L706.75,384.10 L707.00,383.98 L707.25,383.84 L707.50,383.70 L707.75,383.55 L708.00,383.39 L708.25,383.22 L708.50,383.04 L708.75,382.85 L709.00,382.64 L709.25,382.43 L709.50,382.20 L709.75,381.96 L710.00,381.71 L710.25,381.44 L710.50,381.15 L710.75,380.86 L711.00,380.54 L711.25,380.21 L711.50,379.86 L711.75,379.49 L712.00,379.11 L712.25,378.70 L712.50,378.28 L712.75,377.83 L713.00,377.37 L713.25,376.88 L713.50,376.37 L713.75,375.83 L714.00,375.27 L714.25,374.69 L714.50,374.08 L714.75,373.45 L715.00,372.78 L715.25,372.09 L715.50,371.37 L715.75,370.62 L716.00,369.85 L716.25,369.04 L716.50,368.20 L716.75,367.33 L717.00,366.43 L717.25,365.49 L717.50,364.52 L717.75,363.52 L718.00,362.48 L718.25,361.41 L718.50,360.30 L718.75,359.16 L719.00,357.98 L719.25,356.77 L719.50,355.52 L719.75,354.24 L720.00,352.91 L720.25,351.56 L720.50,350.16 L720.75,348.73 L721.00,347.26 L721.25,345.76 L721.50,344.22 L721.75,342.64 L722.00,341.04 L722.25,339.39 L722.50,337.71 L722.75,336.00 L723.00,334.26 L723.25,332.48 L723.50,330.68 L723.75,328.84 L724.00,326.98 L724.25,325.08 L724.50,323.16 L724.75,321.22 L725.00,319.25 L725.25,317.26 L725.50,315.25 L725.75,313.22 L726.00,311.17 L726.25,309.11 L726.50,307.03 L726.75,304.94 L727.00,302.84 L727.25,300.73 L727.50,298.62 L727.75,296.50 L728.00,294.38 L728.25,292.26 L728.50,290.15 L728.75,288.04 L729.00,285.94 L729.25,283.85 L729.50,281.77 L729.75,279.71 L730.00,277.67 L730.25,275.65 L730.50,273.65 L730.75,271.68 L731.00,269.73 L731.25,267.82 L731.50,265.94 L731.75,264.10 L732.00,262.30 L732.25,260.54 L732.50,258.83 L732.75,257.16 L733.00,255.54 L733.25,253.97 L733.50,252.45 L733.75,251.00 L734.00,249.60 L734.25,248.26 L734.50,246.98 L734.75,245.77 L735.00,244.63 L735.25,243.55 L735.50,242.55 L735.75,241.61 L736.00,240.75 L736.25,239.96 L736.50,239.25 L736.75,238.62 L737.00,238.06 L737.25,237.59 L737.50,237.19 L737.75,236.87 L738.00,236.63 L738.25,236.48 L738.50,236.41 L738.75,236.41 L739.00,236.50 L739.25,236.68 L739.50,236.93 L739.75,237.26 L740.00,237.67 L740.25,238.17 L740.50,238.74 L740.75,239.39 L741.00,240.11 L741.25,240.92 L741.50,241.79 L741.75,242.74 L742.00,243.76 L742.25,244.85 L742.50,246.01 L742.75,247.23 L743.00,248.52 L743.25,249.87 L743.50,251.28 L743.75,252.75 L744.00,254.28 L744.25,255.85 L744.50,257.48 L744.75,259.16 L745.00,260.89 L745.25,262.66 L745.50,264.47 L745.75,266.31 L746.00,268.20 L746.25,270.12 L746.50,272.07 L746.75,274.04 L747.00,276.05 L747.25,278.07 L747.50,280.12 L747.75,282.18 L748.00,284.26 L748.25,286.36 L748.50,288.46 L748.75,290.57 L749.00,292.68 L749.25,294.80 L749.50,296.92 L749.75,299.04 L750.00,301.15 L750.25,303.26 L750.50,305.35 L750.75,307.44 L751.00,309.52 L751.25,311.58 L751.50,313.62 L751.75,315.65 L752.00,317.66 L752.25,319.64 L752.50,321.61 L752.75,323.55 L753.00,325.46 L753.25,327.35 L753.50,329.21 L753.75,331.04 L754.00,332.84 L754.25,334.60 L754.50,336.34 L754.75,338.05 L755.00,339.72 L755.25,341.35 L755.50,342.96 L755.75,344.52 L756.00,346.05 L756.25,347.55 L756.50,349.01 L756.75,350.44 L757.00,351.82 L757.25,353.17 L757.50,354.49 L757.75,355.77 L758.00,357.01 L758.25,358.22 L758.50,359.39 L758.75,360.52 L759.00,361.62 L759.25,362.68 L759.50,363.71 L759.75,364.71 L760.00,365.67 L760.25,366.60 L760.50,367.50 L760.75,368.36 L761.00,369.19 L761.25,370.00 L761.50,370.77 L761.75,371.51 L762.00,372.22 L762.25,372.91 L762.50,373.57 L762.75,374.20 L763.00,374.80 L763.25,375.38 L763.50,375.93 L763.75,376.46 L764.00,376.97 L764.25,377.45 L764.50,377.92 L764.75,378.36 L765.00,378.78 L765.25,379.18 L765.50,379.56 L765.75,379.93 L766.00,380.27 L766.25,380.60 L766.50,380.91 L766.75,381.21 L767.00,381.49 L767.25,381.76 L767.50,382.01 L767.75,382.25 L768.00,382.47 L768.25,382.69 L768.50,382.89 L768.75,383.08 L769.00,383.26 L769.25,383.43 L769.50,383.59 L769.75,383.74 L770.00,383.89 L770.25,384.02 L770.50,384.15 L770.75,384.27 L771.00,384.38 L771.25,384.48 L771.50,384.58 L771.75,384.67 L772.00,384.76 L772.25,384.84 L772.50,384.91 L772.75,384.98 L773.00,385.05 L773.25,385.11 L773.50,385.17 L773.75,385.22 L774.00,385.27 L774.25,385.32 L774.50,385.36 L774.75,385.41 L775.00,385.44 L775.25,385.48 L775.50,385.51 L775.75,385.54 L776.00,385.57 L776.25,385.60 L776.50,385.62 L776.75,385.64 L777.00,385.66 L777.25,385.68 L777.50,385.70 L777.75,385.72 L778.00,385.73 L778.25,385.75 L778.50,385.76 L778.75,385.77 L779.00,385.78 L779.25,385.79 L779.50,385.80 L779.75,385.81 L780.00,385.82 L780.25,385.82 L780.50,385.83 L780.75,385.84 L781.00,385.84 L781.25,385.85 L781.50,385.85 L781.75,385.86 L782.00,385.86 L782.25,385.86 L782.50,385.87 L782.75,385.87 L783.00,385.87 L783.25,385.88 L783.50,385.88 L783.75,385.88 L784.00,385.88 L784.25,385.88 L784.50,385.89 L784.75,385.89 L785.00,385.89 L785.25,385.89 L785.50,385.89 L785.75,385.89 L786.00,385.89 L786.25,385.89 L786.50,385.89 L786.75,385.89 L787.00,385.89 L787.25,385.90 L787.50,385.90 L787.75,385.90 L788.00,385.90 L788.25,385.90 L788.50,385.90 L788.75,385.90 L789.00,385.90 L789.25,385.90 L789.50,385.90 L789.75,385.90 L790.00,385.90 L790.25,385.90 L790.50,385.90 L790.75,385.90 L791.00,385.90 L791.25,385.90 L791.50,385.90 L791.75,385.90 L792.00,385.90 L792.25,385.90 L792.50,385.90 L792.75,385.90 L793.00,385.90 L793.25,385.90 L793.50,385.90 L793.75,385.90 L794.00,385.90 L794.25,385.90 L794.50,385.90 L794.75,385.90 L795.00,385.90 L795.25,385.90 L795.50,385.90 L795.75,385.90 L796.00,385.90 L796.25,385.90 L796.50,385.90 L796.75,385.90 L797.00,385.91 L797.25,385.91 L797.50,385.92 L797.75,385.94 L798.00,385.97 L798.25,386.01 L798.50,386.07 L798.75,386.16 L799.00,386.27 L799.25,386.42 L799.50,386.59 L799.75,386.77 L800.00,386.96 L800.25,387.13 L800.50,387.28 L800.75,387.37 L801.00,387.40 L801.25,387.37 L801.50,387.28 L801.75,387.13 L802.00,386.96 L802.25,386.77 L802.50,386.59 L802.75,386.42 L803.00,386.27 L803.25,386.16 L803.50,386.07 L803.75,386.01 L804.00,385.97 L804.25,385.94 L804.50,385.92 L804.75,385.91 L805.00,385.91 L805.25,385.90 L805.50,385.90 L805.75,385.90 L806.00,385.90 L806.25,385.90 L806.50,385.90 L806.75,385.90 L807.00,385.90 L807.25,385.90 L807.50,385.90 L807.75,385.90 L808.00,385.90 L808.25,385.90 L808.50,385.90 L808.75,385.90 L809.00,385.90 L809.25,385.90 L809.50,385.90 L809.75,385.90 L810.00,385.90 L810.25,385.90 L810.50,385.90 L810.75,385.90 L811.00,385.90 L811.25,385.90 L811.50,385.90 L811.75,385.90 L812.00,385.90 L812.25,385.90 L812.50,385.90 L812.75,385.90 L813.00,385.90 L813.25,385.90 L813.50,385.90 L813.75,385.90 L814.00,385.90 L814.25,385.90 L814.50,385.90 L814.75,385.90 L815.00,385.90 L815.25,385.90 L815.50,385.90 L815.75,385.90 L816.00,385.90 L816.25,385.90 L816.50,385.90 L816.75,385.90 L817.00,385.90 L817.25,385.90 L817.50,385.90 L817.75,385.90 L818.00,385.90 L818.25,385.90 L818.50,385.90 L818.75,385.90 L819.00,385.90 L819.25,385.90 L819.50,385.90 L819.75,385.90 L820.00,385.90 L820.25,385.90 L820.50,385.90 L820.75,385.90 L821.00,385.90 L821.25,385.90 L821.50,385.90 L821.75,385.90 L822.00,385.90 L822.25,385.90 L822.50,385.90 L822.75,385.90 L823.00,385.90 L823.25,385.90 L823.50,385.90 L823.75,385.90 L824.00,385.90 L824.25,385.90 L824.50,385.90 L824.75,385.90 L825.00,385.90 L825.25,385.90 L825.50,385.90 L825.75,385.90 L826.00,385.90 L826.25,385.90 L826.50,385.90 L826.75,385.90 L827.00,385.90 L827.25,385.90 L827.50,385.90 L827.75,385.90 L828.00,385.90 L828.25,385.90 L828.50,385.90 L828.75,385.90 L829.00,385.90 L829.25,385.90 L829.50,385.90 L829.75,385.90 L830.00,385.90 L830.25,385.90 L830.50,385.90 L830.75,385.90 L831.00,385.90" fill="none" stroke="#4a4a7c" stroke-width="1.25" stroke-linejoin="round"/>
</g>
<polyline points="36.8,40.2 36.8,427.2 855.6,427.2" fill="none" stroke="#4a4a74" stroke-width="1.5"/>
<line x1="32.8" y1="375.2" x2="36.8" y2="375.2" stroke="#4a4a74" stroke-width="1.1"/>
<text x="33.0" y="377.7" font-family="Liberation Sans, sans-serif" font-size="6.9" fill="#454545" stroke="#454545" stroke-width="0.12" text-anchor="end" textLength="8.1" lengthAdjust="spacingAndGlyphs">100</text>
<line x1="32.8" y1="310.4" x2="36.8" y2="310.4" stroke="#4a4a74" stroke-width="1.1"/>
<text x="33.0" y="312.9" font-family="Liberation Sans, sans-serif" font-size="6.9" fill="#454545" stroke="#454545" stroke-width="0.12" text-anchor="end" textLength="8.1" lengthAdjust="spacingAndGlyphs">200</text>
<line x1="32.8" y1="245.5" x2="36.8" y2="245.5" stroke="#4a4a74" stroke-width="1.1"/>
<text x="33.0" y="248.0" font-family="Liberation Sans, sans-serif" font-size="6.9" fill="#454545" stroke="#454545" stroke-width="0.12" text-anchor="end" textLength="8.1" lengthAdjust="spacingAndGlyphs">300</text>
<line x1="32.8" y1="180.7" x2="36.8" y2="180.7" stroke="#4a4a74" stroke-width="1.1"/>
<text x="33.0" y="183.2" font-family="Liberation Sans, sans-serif" font-size="6.9" fill="#454545" stroke="#454545" stroke-width="0.12" text-anchor="end" textLength="8.1" lengthAdjust="spacingAndGlyphs">400</text>
<line x1="32.8" y1="115.9" x2="36.8" y2="115.9" stroke="#4a4a74" stroke-width="1.1"/>
<text x="33.0" y="118.4" font-family="Liberation Sans, sans-serif" font-size="6.9" fill="#454545" stroke="#454545" stroke-width="0.12" text-anchor="end" textLength="8.1" lengthAdjust="spacingAndGlyphs">500</text>
<line x1="32.8" y1="51.1" x2="36.8" y2="51.1" stroke="#4a4a74" stroke-width="1.1"/>
<text x="33.0" y="53.6" font-family="Liberation Sans, sans-serif" font-size="6.9" fill="#454545" stroke="#454545" stroke-width="0.12" text-anchor="end" textLength="8.1" lengthAdjust="spacingAndGlyphs">600</text>
<text x="23.3" y="40.3" font-family="Liberation Sans, sans-serif" font-size="6.6" fill="#404040" textLength="9.6" lengthAdjust="spacingAndGlyphs">[mV]</text>
<text transform="translate(20.8,233) rotate(-90)" font-family="Liberation Sans, sans-serif" font-size="5.6" fill="#505050" text-anchor="middle">Voltage</text>
<text x="37.9" y="435.6" font-family="Liberation Sans, sans-serif" font-size="6.0" fill="#454545" stroke="#454545" stroke-width="0.1" text-anchor="middle" textLength="2.3" lengthAdjust="spacingAndGlyphs">0</text>
<line x1="165.9" y1="427.2" x2="165.9" y2="430.2" stroke="#4a4a74" stroke-width="1.2"/>
<text x="165.9" y="435.6" font-family="Liberation Sans, sans-serif" font-size="6.0" fill="#454545" stroke="#454545" stroke-width="0.1" text-anchor="middle" textLength="2.3" lengthAdjust="spacingAndGlyphs">5</text>
<line x1="293.9" y1="427.2" x2="293.9" y2="430.2" stroke="#4a4a74" stroke-width="1.2"/>
<text x="293.9" y="435.6" font-family="Liberation Sans, sans-serif" font-size="6.0" fill="#454545" stroke="#454545" stroke-width="0.1" text-anchor="middle" textLength="4.6" lengthAdjust="spacingAndGlyphs">10</text>
<line x1="421.9" y1="427.2" x2="421.9" y2="430.2" stroke="#4a4a74" stroke-width="1.2"/>
<text x="421.9" y="435.6" font-family="Liberation Sans, sans-serif" font-size="6.0" fill="#454545" stroke="#454545" stroke-width="0.1" text-anchor="middle" textLength="4.6" lengthAdjust="spacingAndGlyphs">15</text>
<line x1="549.9" y1="427.2" x2="549.9" y2="430.2" stroke="#4a4a74" stroke-width="1.2"/>
<text x="549.9" y="435.6" font-family="Liberation Sans, sans-serif" font-size="6.0" fill="#454545" stroke="#454545" stroke-width="0.1" text-anchor="middle" textLength="4.6" lengthAdjust="spacingAndGlyphs">20</text>
<line x1="677.9" y1="427.2" x2="677.9" y2="430.2" stroke="#4a4a74" stroke-width="1.2"/>
<text x="677.9" y="435.6" font-family="Liberation Sans, sans-serif" font-size="6.0" fill="#454545" stroke="#454545" stroke-width="0.1" text-anchor="middle" textLength="4.6" lengthAdjust="spacingAndGlyphs">25</text>
<line x1="805.9" y1="427.2" x2="805.9" y2="430.2" stroke="#4a4a74" stroke-width="1.2"/>
<text x="805.9" y="435.6" font-family="Liberation Sans, sans-serif" font-size="6.0" fill="#454545" stroke="#454545" stroke-width="0.1" text-anchor="middle" textLength="4.6" lengthAdjust="spacingAndGlyphs">30</text>
<text x="445" y="443.5" font-family="Liberation Sans, sans-serif" font-size="5.6" fill="#505050" text-anchor="middle">Time</text>
<text x="842.3" y="441.8" font-family="Liberation Sans, sans-serif" font-size="5.8" fill="#505050" textLength="11.9" lengthAdjust="spacingAndGlyphs">[min.]</text>
<text transform="translate(209.7,115.7) rotate(-90) scale(0.82,1)" font-family="Liberation Sans, sans-serif" font-size="8.4" fill="#333" stroke="#333" stroke-width="0.18">6,62</text>
<text transform="translate(218.4,157.0) rotate(-90) scale(0.82,1)" font-family="Liberation Sans, sans-serif" font-size="8.4" fill="#333" stroke="#333" stroke-width="0.18">6,97</text>
<text transform="translate(244.6,329.2) rotate(-90) scale(0.82,1)" font-family="Liberation Sans, sans-serif" font-size="8.4" fill="#333" stroke="#333" stroke-width="0.18">7,97 Argininosuccinic acid</text>
<text transform="translate(263.3,314.2) rotate(-90) scale(0.82,1)" font-family="Liberation Sans, sans-serif" font-size="8.4" fill="#333" stroke="#333" stroke-width="0.18">8,71</text>
<text transform="translate(279.5,136.5) rotate(-90) scale(0.82,1)" font-family="Liberation Sans, sans-serif" font-size="8.4" fill="#333" stroke="#333" stroke-width="0.18">9,35</text>
<text transform="translate(294.0,316.1) rotate(-90) scale(0.82,1)" font-family="Liberation Sans, sans-serif" font-size="8.4" fill="#333" stroke="#333" stroke-width="0.18">9,90</text>
<text transform="translate(314.7,273.3) rotate(-90) scale(0.82,1)" font-family="Liberation Sans, sans-serif" font-size="8.4" fill="#333" stroke="#333" stroke-width="0.18">10,72 Valine</text>
<text transform="translate(357.3,348.0) rotate(-90) scale(0.82,1)" font-family="Liberation Sans, sans-serif" font-size="8.4" fill="#333" stroke="#333" stroke-width="0.18">12,37 Homocysteine</text>
<text transform="translate(379.3,305.1) rotate(-90) scale(0.82,1)" font-family="Liberation Sans, sans-serif" font-size="8.4" fill="#333" stroke="#333" stroke-width="0.18">13,23 Methionine</text>
<text transform="translate(410.0,311.9) rotate(-90) scale(0.82,1)" font-family="Liberation Sans, sans-serif" font-size="8.4" fill="#333" stroke="#333" stroke-width="0.18">14,42 allo-isoleucine</text>
<text transform="translate(451.8,317.3) rotate(-90) scale(0.82,1)" font-family="Liberation Sans, sans-serif" font-size="8.4" fill="#333" stroke="#333" stroke-width="0.18">16,06 Isoleucine</text>
<text transform="translate(484.3,322.9) rotate(-90) scale(0.82,1)" font-family="Liberation Sans, sans-serif" font-size="8.4" fill="#333" stroke="#333" stroke-width="0.18">17,33 Leucine</text>
<text transform="translate(574.1,336.9) rotate(-90) scale(0.82,1)" font-family="Liberation Sans, sans-serif" font-size="8.4" fill="#333" stroke="#333" stroke-width="0.18">20,83 Tyrosine</text>
<text transform="translate(673.1,336.9) rotate(-90) scale(0.82,1)" font-family="Liberation Sans, sans-serif" font-size="8.4" fill="#333" stroke="#333" stroke-width="0.18">24,68 Phenylalanine</text>
<text transform="translate(741.5,232.9) rotate(-90) scale(0.82,1)" font-family="Liberation Sans, sans-serif" font-size="8.4" fill="#333" stroke="#333" stroke-width="0.18">27,34 Homocystine</text>
</svg>
</body></html>
